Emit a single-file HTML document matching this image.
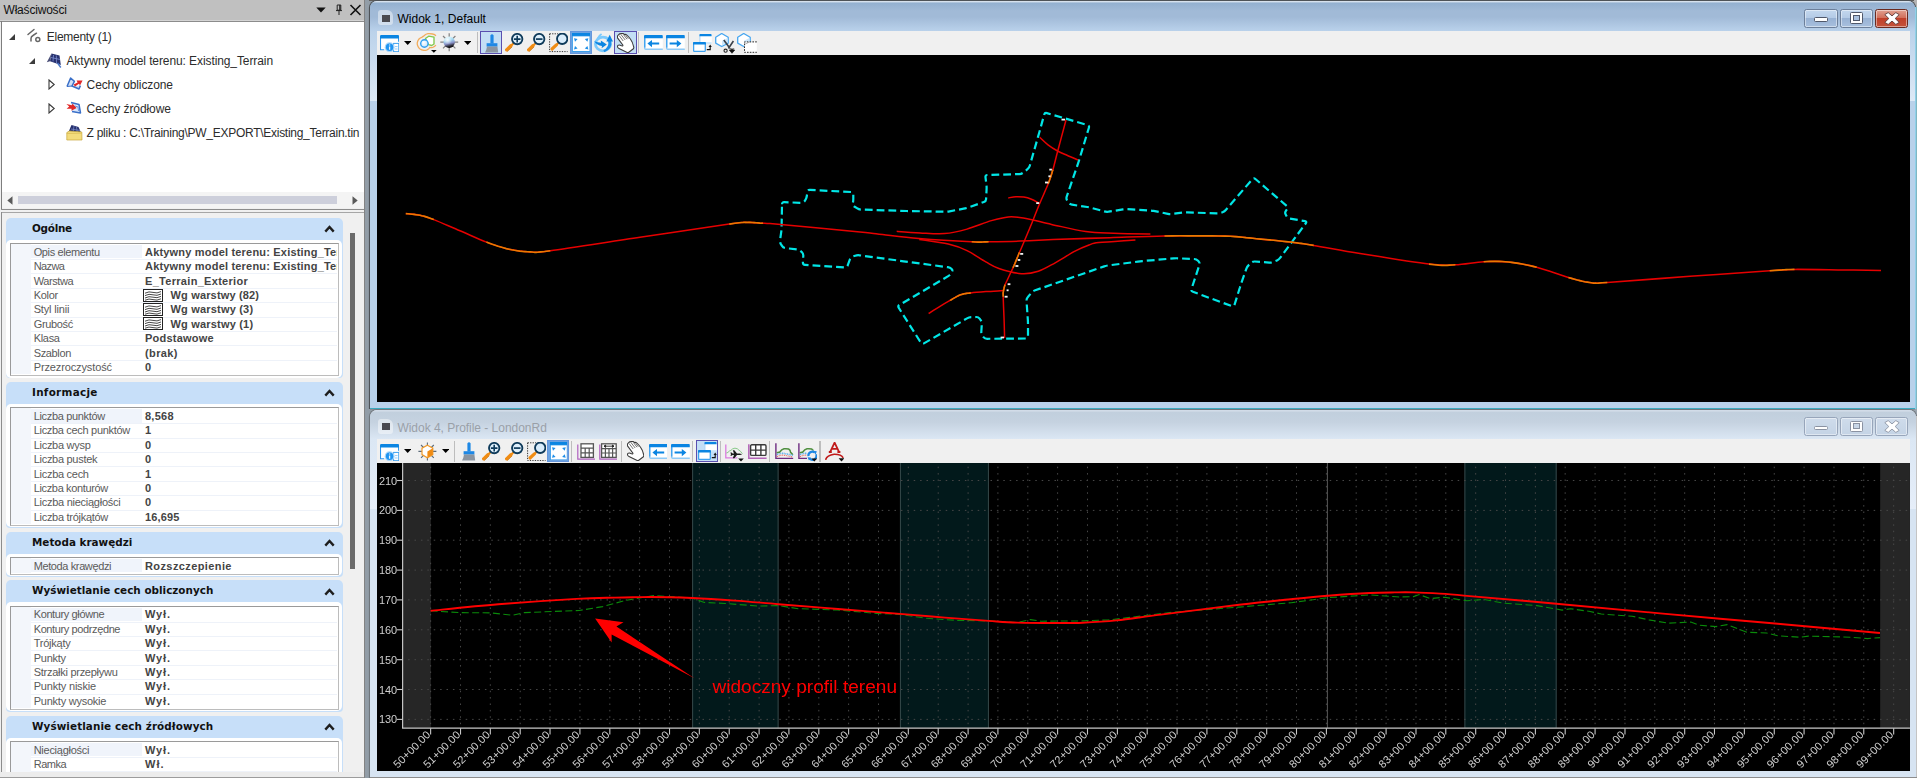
<!DOCTYPE html>
<html lang="pl"><head><meta charset="utf-8"><title>Właściwości</title><style>
html,body{margin:0;padding:0}
body{width:1917px;height:778px;position:relative;overflow:hidden;background:#f0f0f0;font-family:"Liberation Sans",sans-serif}
.a{position:absolute}
.t{position:absolute;white-space:pre;line-height:1;transform:translateY(-50%)}
</style></head>
<body>
<div id="left" class="a" style="left:0;top:0;width:364px;height:778px;overflow:hidden;background:#f0f0f0"><div class="a" style="left:0;top:0;width:364px;height:21px;background:#c0c0c0"></div><div class="a" style="left:0;top:19.8px;width:364px;height:1.1px;background:#d4d4d4"></div><div class="a" style="left:0;top:20.8px;width:364px;height:1.2px;background:#8c8c8c"></div><div class="t" style="left:3.5px;top:10.2px;font:12px 'Liberation Sans',sans-serif;color:#111;letter-spacing:-0.195px;">Właściwości</div><svg class="a" style="left:316px;top:7px" width="10" height="6" viewBox="0 0 10 6"><path d="M0.3 0.6 L9.7 0.6 L5 5.6 Z" fill="#111"/></svg><svg class="a" style="left:335px;top:4px" width="8" height="12" viewBox="0 0 8 12"><path d="M2.2 1 L5.8 1 L5.8 6.2 L2.2 6.2 Z M1 6.6 L7 6.6 M4 6.6 L4 11" fill="none" stroke="#222" stroke-width="1"/><path d="M4.8 1 L4.8 6.2" stroke="#222" stroke-width="1.2"/></svg><svg class="a" style="left:349px;top:4px" width="13" height="12" viewBox="0 0 13 12"><path d="M1.5 1 L11.5 11 M11.5 1 L1.5 11" stroke="#111" stroke-width="1.6" fill="none"/></svg><div class="a" style="left:2px;top:22px;width:362px;height:170px;background:#fff"></div><div class="a" style="left:1px;top:21px;width:1px;height:188px;background:#7e7e7e"></div><svg class="a" style="left:26px;top:28px" width="16" height="16" viewBox="0 0 16 16"><path d="M2 6.5 L8 1.5 M5 13 L5 10.5 Q5 8.5 7 7.5 L10.5 5.2" fill="none" stroke="#666" stroke-width="1.5" stroke-linecap="round"/><circle cx="11.8" cy="11.5" r="2" fill="none" stroke="#666" stroke-width="1.5"/></svg><svg class="a" style="left:46px;top:52px" width="16" height="17" viewBox="0 0 16 17"><path d="M5.5 1.5 L13.5 3.5 L14.8 13 L4 9.2 Z" fill="#26306e"/><path d="M0.8 10.2 L5.5 1.5 L4 9.2 Z" fill="#4a4f78"/><path d="M7.5 3 L7 9.5 M10.3 3.5 L10.5 11 M5 5.5 L14 7.5" stroke="#7d8fd0" stroke-width="0.8" fill="none"/><path d="M11.5 11 L14.8 15.5" stroke="#4a78c8" stroke-width="1.4"/></svg><svg class="a" style="left:66px;top:76px" width="17" height="16" viewBox="0 0 17 16"><path d="M1 10.5 L4.6 2 L8.4 5.4 L6 10 L13 13 L14.4 9.6" fill="#cfe0f8" stroke="#3a6fc8" stroke-width="1.5" stroke-linejoin="round"/><path d="M1 10.5 L6 10" stroke="#3a6fc8" stroke-width="1.2"/><path d="M7.6 8.6 L11.6 6.6 L10.6 4.6 L16.6 4.4 L14 9.6 L13 7.8 L9 10.6 Z" fill="#e02828"/></svg><svg class="a" style="left:66px;top:100px" width="17" height="16" viewBox="0 0 17 16"><path d="M5 2.5 L13 4.5 L14.5 13 L6 11.5" fill="#dbe8fb" stroke="#3a6fc8" stroke-width="1.5" stroke-linejoin="round"/><path d="M0.4 4 L6 5.2 L6.4 3.4 L10.6 8 L5.4 10.8 L5.6 8.8 L0.6 8.8 L3.2 6.4 Z" fill="#e02828"/><path d="M9 6 L12 7 L12.5 11" stroke="#6b95de" stroke-width="1" fill="none"/></svg><svg class="a" style="left:66px;top:123px" width="17" height="18" viewBox="0 0 17 18"><path d="M5.5 2 L12.5 4 L15 9.5 L2.5 9 Z" fill="#26306e"/><path d="M8 3 L7.2 8.5 M10.5 4 L11.2 9 M5 6 L14 7.5" stroke="#7d8fd0" stroke-width="0.7"/><path d="M0.8 9.5 L3.5 8 L15.8 9 L16 17 L0.8 17 Z" fill="#f4dc7c" stroke="#c8a83c" stroke-width="0.7"/><path d="M0.8 10.5 L16 10.2" stroke="#d9bd55" stroke-width="0.8"/></svg><svg class="a" style="left:8px;top:33px" width="8" height="8" viewBox="0 0 8 8"><path d="M7 1 L7 7 L1 7 Z" fill="#3c3c3c"/></svg><svg class="a" style="left:28px;top:57px" width="8" height="8" viewBox="0 0 8 8"><path d="M7 1 L7 7 L1 7 Z" fill="#3c3c3c"/></svg><svg class="a" style="left:48px;top:79px" width="8" height="11" viewBox="0 0 8 11"><path d="M1 1 L6.2 5.5 L1 10 Z" fill="#fff" stroke="#3a3a3a" stroke-width="1.1"/></svg><svg class="a" style="left:48px;top:103px" width="8" height="11" viewBox="0 0 8 11"><path d="M1 1 L6.2 5.5 L1 10 Z" fill="#fff" stroke="#3a3a3a" stroke-width="1.1"/></svg><div class="t" style="left:46.8px;top:37.0px;font:12px 'Liberation Sans',sans-serif;color:#2c2c2c;letter-spacing:-0.269px;">Elementy (1)</div><div class="t" style="left:66.4px;top:61.2px;font:12px 'Liberation Sans',sans-serif;color:#2c2c2c;letter-spacing:-0.092px;">Aktywny model terenu: Existing_Terrain</div><div class="t" style="left:86.6px;top:85.2px;font:12px 'Liberation Sans',sans-serif;color:#2c2c2c;letter-spacing:-0.124px;">Cechy obliczone</div><div class="t" style="left:86.6px;top:108.8px;font:12px 'Liberation Sans',sans-serif;color:#2c2c2c;letter-spacing:-0.077px;">Cechy źródłowe</div><div class="t" style="left:86.6px;top:132.7px;font:12px 'Liberation Sans',sans-serif;color:#2c2c2c;letter-spacing:-0.272px;">Z pliku : C:\Training\PW_EXPORT\Existing_Terrain.tin</div><div class="a" style="left:2px;top:192px;width:362px;height:16.4px;background:#f4f4f4"></div><div class="a" style="left:18.4px;top:196px;width:319px;height:8.4px;background:#cdcfdb"></div><svg class="a" style="left:7px;top:196px" width="6" height="9" viewBox="0 0 6 9"><path d="M5.5 0.3 L5.5 8.7 L0.3 4.5 Z" fill="#5a5a5a"/></svg><svg class="a" style="left:351.5px;top:196px" width="6" height="9" viewBox="0 0 6 9"><path d="M0.5 0.3 L0.5 8.7 L5.7 4.5 Z" fill="#5a5a5a"/></svg><div class="a" style="left:1px;top:208.6px;width:363px;height:1.2px;background:#8c8c8c"></div><div class="a" style="left:1px;top:211.6px;width:363px;height:1.2px;background:#a6a6a6"></div><div class="a" style="left:1px;top:212px;width:1px;height:566px;background:#8c8c8c"></div><div class="a" style="left:5.6px;top:217.8px;width:337.4px;height:160.5px;background:#c7dff9;border-radius:5px 5px 4px 4px"></div><div class="a" style="left:6.4px;top:239.6px;width:335.8px;height:138.1px;background:#fff;border-radius:5px"></div><div class="t" style="left:32px;top:227.70000000000002px;font:bold 10.4px 'DejaVu Sans','Liberation Sans',sans-serif;color:#111;letter-spacing:-0.254px;">Ogólne</div><svg class="a" style="left:324px;top:225.0px" width="11" height="8" viewBox="0 0 11 8"><path d="M1.3 6.6 L5.5 2 L9.7 6.6" fill="none" stroke="#1e1e1e" stroke-width="2.4"/></svg><div class="a" style="left:10px;top:243.0px;width:326.6px;height:131.0px;border:1px solid #9a9a9a;border-right-color:#bcbcbc;border-bottom-color:#bcbcbc;background:#fff"></div><div class="a" style="left:11px;top:244.0px;width:20px;height:130.0px;background:#f3f6fb"></div><div class="a" style="left:31px;top:245.1px;width:111px;height:13.4px;background:#f0f4fb"></div><div class="a" style="left:31px;top:259.0px;width:306px;height:1px;background:#eef2f9"></div><div class="t" style="left:33.7px;top:251.8px;font:11px 'Liberation Sans',sans-serif;color:#5a5a5a;letter-spacing:-0.372px;">Opis elementu</div><div class="a" style="left:143px;top:244.8px;width:194px;height:14px;overflow:hidden"><div class="t" style="left:2px;top:7px;font:bold 11px 'Liberation Sans',sans-serif;color:#444;letter-spacing:0.193px;">Aktywny model terenu: Existing_Terrain</div></div><div class="a" style="left:31px;top:273.4px;width:306px;height:1px;background:#eef2f9"></div><div class="t" style="left:33.7px;top:266.2px;font:11px 'Liberation Sans',sans-serif;color:#5a5a5a;letter-spacing:-0.605px;">Nazwa</div><div class="a" style="left:143px;top:259.2px;width:194px;height:14px;overflow:hidden"><div class="t" style="left:2px;top:7px;font:bold 11px 'Liberation Sans',sans-serif;color:#444;letter-spacing:0.193px;">Aktywny model terenu: Existing_Terrain</div></div><div class="a" style="left:31px;top:287.8px;width:306px;height:1px;background:#eef2f9"></div><div class="t" style="left:33.7px;top:280.6px;font:11px 'Liberation Sans',sans-serif;color:#5a5a5a;letter-spacing:-0.396px;">Warstwa</div><div class="a" style="left:143px;top:273.6px;width:194px;height:14px;overflow:hidden"><div class="t" style="left:2px;top:7px;font:bold 11px 'Liberation Sans',sans-serif;color:#444;letter-spacing:0.304px;">E_Terrain_Exterior</div></div><div class="a" style="left:31px;top:302.2px;width:306px;height:1px;background:#eef2f9"></div><div class="t" style="left:33.7px;top:295.0px;font:11px 'Liberation Sans',sans-serif;color:#5a5a5a;letter-spacing:-0.298px;">Kolor</div><div class="a" style="left:143px;top:288.0px;width:194px;height:14px;overflow:hidden"><svg class="a" style="left:0.4px;top:0.6px" width="20" height="13" viewBox="0 0 20 13"><rect x="0.5" y="0.5" width="19" height="12" fill="#fff" stroke="#222" stroke-width="1"/><path d="M2 4.2 Q6 2 10 3.4 T18 2.6 M2 6.6 Q6 4.4 10 5.8 T18 5 M2 9 Q6 6.8 10 8.2 T18 7.4 M2 11.2 Q6 9.2 10 10.6 T18 9.8" fill="none" stroke="#333" stroke-width="0.9"/></svg><div class="t" style="left:27.5px;top:7px;font:bold 11px 'Liberation Sans',sans-serif;color:#444;letter-spacing:0.168px;">Wg warstwy (82)</div></div><div class="a" style="left:31px;top:316.6px;width:306px;height:1px;background:#eef2f9"></div><div class="t" style="left:33.7px;top:309.40000000000003px;font:11px 'Liberation Sans',sans-serif;color:#5a5a5a;letter-spacing:-0.16px;">Styl linii</div><div class="a" style="left:143px;top:302.4px;width:194px;height:14px;overflow:hidden"><svg class="a" style="left:0.4px;top:0.6px" width="20" height="13" viewBox="0 0 20 13"><rect x="0.5" y="0.5" width="19" height="12" fill="#fff" stroke="#222" stroke-width="1"/><path d="M2 4.2 Q6 2 10 3.4 T18 2.6 M2 6.6 Q6 4.4 10 5.8 T18 5 M2 9 Q6 6.8 10 8.2 T18 7.4 M2 11.2 Q6 9.2 10 10.6 T18 9.8" fill="none" stroke="#333" stroke-width="0.9"/></svg><div class="t" style="left:27.5px;top:7px;font:bold 11px 'Liberation Sans',sans-serif;color:#444;letter-spacing:0.194px;">Wg warstwy (3)</div></div><div class="a" style="left:31px;top:331.0px;width:306px;height:1px;background:#eef2f9"></div><div class="t" style="left:33.7px;top:323.8px;font:11px 'Liberation Sans',sans-serif;color:#5a5a5a;letter-spacing:-0.354px;">Grubość</div><div class="a" style="left:143px;top:316.8px;width:194px;height:14px;overflow:hidden"><svg class="a" style="left:0.4px;top:0.6px" width="20" height="13" viewBox="0 0 20 13"><rect x="0.5" y="0.5" width="19" height="12" fill="#fff" stroke="#222" stroke-width="1"/><path d="M2 4.2 Q6 2 10 3.4 T18 2.6 M2 6.6 Q6 4.4 10 5.8 T18 5 M2 9 Q6 6.8 10 8.2 T18 7.4 M2 11.2 Q6 9.2 10 10.6 T18 9.8" fill="none" stroke="#333" stroke-width="0.9"/></svg><div class="t" style="left:27.5px;top:7px;font:bold 11px 'Liberation Sans',sans-serif;color:#444;letter-spacing:0.194px;">Wg warstwy (1)</div></div><div class="a" style="left:31px;top:345.4px;width:306px;height:1px;background:#eef2f9"></div><div class="t" style="left:33.7px;top:338.20000000000005px;font:11px 'Liberation Sans',sans-serif;color:#5a5a5a;letter-spacing:-0.306px;">Klasa</div><div class="a" style="left:143px;top:331.2px;width:194px;height:14px;overflow:hidden"><div class="t" style="left:2px;top:7px;font:bold 11px 'Liberation Sans',sans-serif;color:#444;letter-spacing:0.228px;">Podstawowe</div></div><div class="a" style="left:31px;top:359.8px;width:306px;height:1px;background:#eef2f9"></div><div class="t" style="left:33.7px;top:352.6px;font:11px 'Liberation Sans',sans-serif;color:#5a5a5a;letter-spacing:-0.352px;">Szablon</div><div class="a" style="left:143px;top:345.6px;width:194px;height:14px;overflow:hidden"><div class="t" style="left:2px;top:7px;font:bold 11px 'Liberation Sans',sans-serif;color:#444;letter-spacing:0.39px;">(brak)</div></div><div class="t" style="left:33.7px;top:367.0px;font:11px 'Liberation Sans',sans-serif;color:#5a5a5a;letter-spacing:-0.125px;">Przezroczystość</div><div class="a" style="left:143px;top:360.0px;width:194px;height:14px;overflow:hidden"><div class="t" style="left:2px;top:7px;font:bold 11px 'Liberation Sans',sans-serif;color:#444;letter-spacing:0.075px;">0</div></div><div class="a" style="left:5.6px;top:382.0px;width:337.4px;height:146.1px;background:#c7dff9;border-radius:5px 5px 4px 4px"></div><div class="a" style="left:6.4px;top:403.8px;width:335.8px;height:123.7px;background:#fff;border-radius:5px"></div><div class="t" style="left:32px;top:391.9px;font:bold 10.4px 'DejaVu Sans','Liberation Sans',sans-serif;color:#111;letter-spacing:0.294px;">Informacje</div><svg class="a" style="left:324px;top:389.2px" width="11" height="8" viewBox="0 0 11 8"><path d="M1.3 6.6 L5.5 2 L9.7 6.6" fill="none" stroke="#1e1e1e" stroke-width="2.4"/></svg><div class="a" style="left:10px;top:407.2px;width:326.6px;height:116.6px;border:1px solid #9a9a9a;border-right-color:#bcbcbc;border-bottom-color:#bcbcbc;background:#fff"></div><div class="a" style="left:11px;top:408.2px;width:20px;height:115.6px;background:#f3f6fb"></div><div class="a" style="left:31px;top:409.3px;width:111px;height:13.4px;background:#f0f4fb"></div><div class="a" style="left:31px;top:423.2px;width:306px;height:1px;background:#eef2f9"></div><div class="t" style="left:33.7px;top:416.0px;font:11px 'Liberation Sans',sans-serif;color:#5a5a5a;letter-spacing:-0.331px;">Liczba punktów</div><div class="a" style="left:143px;top:409.0px;width:194px;height:14px;overflow:hidden"><div class="t" style="left:2px;top:7px;font:bold 11px 'Liberation Sans',sans-serif;color:#444;letter-spacing:0.254px;">8,568</div></div><div class="a" style="left:31px;top:437.6px;width:306px;height:1px;background:#eef2f9"></div><div class="t" style="left:33.7px;top:430.4px;font:11px 'Liberation Sans',sans-serif;color:#5a5a5a;letter-spacing:-0.312px;">Liczba cech punktów</div><div class="a" style="left:143px;top:423.4px;width:194px;height:14px;overflow:hidden"><div class="t" style="left:2px;top:7px;font:bold 11px 'Liberation Sans',sans-serif;color:#444;">1</div></div><div class="a" style="left:31px;top:452.0px;width:306px;height:1px;background:#eef2f9"></div><div class="t" style="left:33.7px;top:444.8px;font:11px 'Liberation Sans',sans-serif;color:#5a5a5a;letter-spacing:-0.284px;">Liczba wysp</div><div class="a" style="left:143px;top:437.8px;width:194px;height:14px;overflow:hidden"><div class="t" style="left:2px;top:7px;font:bold 11px 'Liberation Sans',sans-serif;color:#444;letter-spacing:0.075px;">0</div></div><div class="a" style="left:31px;top:466.4px;width:306px;height:1px;background:#eef2f9"></div><div class="t" style="left:33.7px;top:459.2px;font:11px 'Liberation Sans',sans-serif;color:#5a5a5a;letter-spacing:-0.29px;">Liczba pustek</div><div class="a" style="left:143px;top:452.2px;width:194px;height:14px;overflow:hidden"><div class="t" style="left:2px;top:7px;font:bold 11px 'Liberation Sans',sans-serif;color:#444;letter-spacing:0.075px;">0</div></div><div class="a" style="left:31px;top:480.8px;width:306px;height:1px;background:#eef2f9"></div><div class="t" style="left:33.7px;top:473.6px;font:11px 'Liberation Sans',sans-serif;color:#5a5a5a;letter-spacing:-0.281px;">Liczba cech</div><div class="a" style="left:143px;top:466.6px;width:194px;height:14px;overflow:hidden"><div class="t" style="left:2px;top:7px;font:bold 11px 'Liberation Sans',sans-serif;color:#444;">1</div></div><div class="a" style="left:31px;top:495.2px;width:306px;height:1px;background:#eef2f9"></div><div class="t" style="left:33.7px;top:488.0px;font:11px 'Liberation Sans',sans-serif;color:#5a5a5a;letter-spacing:-0.347px;">Liczba konturów</div><div class="a" style="left:143px;top:481.0px;width:194px;height:14px;overflow:hidden"><div class="t" style="left:2px;top:7px;font:bold 11px 'Liberation Sans',sans-serif;color:#444;letter-spacing:0.075px;">0</div></div><div class="a" style="left:31px;top:509.6px;width:306px;height:1px;background:#eef2f9"></div><div class="t" style="left:33.7px;top:502.4px;font:11px 'Liberation Sans',sans-serif;color:#5a5a5a;letter-spacing:-0.264px;">Liczba nieciągłości</div><div class="a" style="left:143px;top:495.4px;width:194px;height:14px;overflow:hidden"><div class="t" style="left:2px;top:7px;font:bold 11px 'Liberation Sans',sans-serif;color:#444;letter-spacing:0.075px;">0</div></div><div class="t" style="left:33.7px;top:516.8px;font:11px 'Liberation Sans',sans-serif;color:#5a5a5a;letter-spacing:-0.286px;">Liczba trójkątów</div><div class="a" style="left:143px;top:509.8px;width:194px;height:14px;overflow:hidden"><div class="t" style="left:2px;top:7px;font:bold 11px 'Liberation Sans',sans-serif;color:#444;letter-spacing:0.157px;">16,695</div></div><div class="a" style="left:5.6px;top:531.8px;width:337.4px;height:45.3px;background:#c7dff9;border-radius:5px 5px 4px 4px"></div><div class="a" style="left:6.4px;top:553.6px;width:335.8px;height:22.9px;background:#fff;border-radius:5px"></div><div class="t" style="left:32px;top:541.6999999999999px;font:bold 10.4px 'DejaVu Sans','Liberation Sans',sans-serif;color:#111;letter-spacing:-0.001px;">Metoda krawędzi</div><svg class="a" style="left:324px;top:539.0px" width="11" height="8" viewBox="0 0 11 8"><path d="M1.3 6.6 L5.5 2 L9.7 6.6" fill="none" stroke="#1e1e1e" stroke-width="2.4"/></svg><div class="a" style="left:10px;top:557.0px;width:326.6px;height:15.8px;border:1px solid #9a9a9a;border-right-color:#bcbcbc;border-bottom-color:#bcbcbc;background:#fff"></div><div class="a" style="left:11px;top:558.0px;width:20px;height:14.8px;background:#f3f6fb"></div><div class="a" style="left:31px;top:559.1px;width:111px;height:13.4px;background:#f0f4fb"></div><div class="t" style="left:33.7px;top:565.8px;font:11px 'Liberation Sans',sans-serif;color:#5a5a5a;letter-spacing:-0.384px;">Metoda krawędzi</div><div class="a" style="left:143px;top:558.8px;width:194px;height:14px;overflow:hidden"><div class="t" style="left:2px;top:7px;font:bold 11px 'Liberation Sans',sans-serif;color:#444;letter-spacing:0.399px;">Rozszczepienie</div></div><div class="a" style="left:5.6px;top:580.4px;width:337.4px;height:131.7px;background:#c7dff9;border-radius:5px 5px 4px 4px"></div><div class="a" style="left:6.4px;top:602.2px;width:335.8px;height:109.3px;background:#fff;border-radius:5px"></div><div class="t" style="left:32px;top:590.3px;font:bold 10.4px 'DejaVu Sans','Liberation Sans',sans-serif;color:#111;letter-spacing:0.012px;">Wyświetlanie cech obliczonych</div><svg class="a" style="left:324px;top:587.6px" width="11" height="8" viewBox="0 0 11 8"><path d="M1.3 6.6 L5.5 2 L9.7 6.6" fill="none" stroke="#1e1e1e" stroke-width="2.4"/></svg><div class="a" style="left:10px;top:605.6px;width:326.6px;height:102.2px;border:1px solid #9a9a9a;border-right-color:#bcbcbc;border-bottom-color:#bcbcbc;background:#fff"></div><div class="a" style="left:11px;top:606.6px;width:20px;height:101.2px;background:#f3f6fb"></div><div class="a" style="left:31px;top:607.7px;width:111px;height:13.4px;background:#f0f4fb"></div><div class="a" style="left:31px;top:621.6px;width:306px;height:1px;background:#eef2f9"></div><div class="t" style="left:33.7px;top:614.4px;font:11px 'Liberation Sans',sans-serif;color:#5a5a5a;letter-spacing:-0.381px;">Kontury główne</div><div class="a" style="left:143px;top:607.4px;width:194px;height:14px;overflow:hidden"><div class="t" style="left:2px;top:7px;font:bold 11px 'Liberation Sans',sans-serif;color:#444;letter-spacing:0.895px;">Wył.</div></div><div class="a" style="left:31px;top:636.0px;width:306px;height:1px;background:#eef2f9"></div><div class="t" style="left:33.7px;top:628.8px;font:11px 'Liberation Sans',sans-serif;color:#5a5a5a;letter-spacing:-0.385px;">Kontury podrzędne</div><div class="a" style="left:143px;top:621.8px;width:194px;height:14px;overflow:hidden"><div class="t" style="left:2px;top:7px;font:bold 11px 'Liberation Sans',sans-serif;color:#444;letter-spacing:0.895px;">Wył.</div></div><div class="a" style="left:31px;top:650.4px;width:306px;height:1px;background:#eef2f9"></div><div class="t" style="left:33.7px;top:643.1999999999999px;font:11px 'Liberation Sans',sans-serif;color:#5a5a5a;letter-spacing:-0.24px;">Trójkąty</div><div class="a" style="left:143px;top:636.2px;width:194px;height:14px;overflow:hidden"><div class="t" style="left:2px;top:7px;font:bold 11px 'Liberation Sans',sans-serif;color:#444;letter-spacing:0.895px;">Wył.</div></div><div class="a" style="left:31px;top:664.8px;width:306px;height:1px;background:#eef2f9"></div><div class="t" style="left:33.7px;top:657.6px;font:11px 'Liberation Sans',sans-serif;color:#5a5a5a;letter-spacing:-0.257px;">Punkty</div><div class="a" style="left:143px;top:650.6px;width:194px;height:14px;overflow:hidden"><div class="t" style="left:2px;top:7px;font:bold 11px 'Liberation Sans',sans-serif;color:#444;letter-spacing:0.895px;">Wył.</div></div><div class="a" style="left:31px;top:679.2px;width:306px;height:1px;background:#eef2f9"></div><div class="t" style="left:33.7px;top:672.0px;font:11px 'Liberation Sans',sans-serif;color:#5a5a5a;letter-spacing:-0.269px;">Strzałki przepływu</div><div class="a" style="left:143px;top:665.0px;width:194px;height:14px;overflow:hidden"><div class="t" style="left:2px;top:7px;font:bold 11px 'Liberation Sans',sans-serif;color:#444;letter-spacing:0.895px;">Wył.</div></div><div class="a" style="left:31px;top:693.6px;width:306px;height:1px;background:#eef2f9"></div><div class="t" style="left:33.7px;top:686.4px;font:11px 'Liberation Sans',sans-serif;color:#5a5a5a;letter-spacing:-0.201px;">Punkty niskie</div><div class="a" style="left:143px;top:679.4px;width:194px;height:14px;overflow:hidden"><div class="t" style="left:2px;top:7px;font:bold 11px 'Liberation Sans',sans-serif;color:#444;letter-spacing:0.895px;">Wył.</div></div><div class="t" style="left:33.7px;top:700.8px;font:11px 'Liberation Sans',sans-serif;color:#5a5a5a;letter-spacing:-0.237px;">Punkty wysokie</div><div class="a" style="left:143px;top:693.8px;width:194px;height:14px;overflow:hidden"><div class="t" style="left:2px;top:7px;font:bold 11px 'Liberation Sans',sans-serif;color:#444;letter-spacing:0.895px;">Wył.</div></div><div class="a" style="left:5.6px;top:715.8px;width:337.4px;height:88.5px;background:#c7dff9;border-radius:5px 5px 4px 4px"></div><div class="a" style="left:6.4px;top:737.6px;width:335.8px;height:66.1px;background:#fff;border-radius:5px"></div><div class="t" style="left:32px;top:725.6999999999999px;font:bold 10.4px 'DejaVu Sans','Liberation Sans',sans-serif;color:#111;letter-spacing:0.088px;">Wyświetlanie cech źródłowych</div><svg class="a" style="left:324px;top:723.0px" width="11" height="8" viewBox="0 0 11 8"><path d="M1.3 6.6 L5.5 2 L9.7 6.6" fill="none" stroke="#1e1e1e" stroke-width="2.4"/></svg><div class="a" style="left:10px;top:741.0px;width:326.6px;height:59.0px;border:1px solid #9a9a9a;border-right-color:#bcbcbc;border-bottom-color:#bcbcbc;background:#fff"></div><div class="a" style="left:11px;top:742.0px;width:20px;height:58.0px;background:#f3f6fb"></div><div class="a" style="left:31px;top:743.1px;width:111px;height:13.4px;background:#f0f4fb"></div><div class="a" style="left:31px;top:757.0px;width:306px;height:1px;background:#eef2f9"></div><div class="t" style="left:33.7px;top:749.8px;font:11px 'Liberation Sans',sans-serif;color:#5a5a5a;letter-spacing:-0.267px;">Nieciągłości</div><div class="a" style="left:143px;top:742.8px;width:194px;height:14px;overflow:hidden"><div class="t" style="left:2px;top:7px;font:bold 11px 'Liberation Sans',sans-serif;color:#444;letter-spacing:0.895px;">Wył.</div></div><div class="a" style="left:31px;top:771.4px;width:306px;height:1px;background:#eef2f9"></div><div class="t" style="left:33.7px;top:764.1999999999999px;font:11px 'Liberation Sans',sans-serif;color:#5a5a5a;letter-spacing:-0.489px;">Ramka</div><div class="a" style="left:143px;top:757.2px;width:194px;height:14px;overflow:hidden"><div class="t" style="left:2px;top:7px;font:bold 11px 'Liberation Sans',sans-serif;color:#444;letter-spacing:1.0px;">Wł.</div></div><div class="a" style="left:31px;top:785.8px;width:306px;height:1px;background:#eef2f9"></div><div class="a" style="left:349.7px;top:233.4px;width:5.2px;height:335.6px;background:#6b6b6b"></div><div class="a" style="left:0;top:772.3px;width:364px;height:5.7px;background:#ececec"></div><div class="a" style="left:0;top:776.5px;width:364px;height:1.5px;background:#9c9c9c"></div></div>
<div class="a" style="left:363.6px;top:0;width:1.4px;height:778px;background:#838383"></div><div class="a" style="left:364.9px;top:0;width:14px;height:778px;background:#929da7"></div><div class="a" style="left:1900px;top:0;width:17px;height:12px;background:#b4b4b4"></div><div class="a" style="left:1900px;top:409px;width:17px;height:12px;background:#9aa4ae"></div><div class="a" style="left:369px;top:0;width:1545px;height:1.1px;background:#5f5d5b"></div><div class="a" style="left:370.0px;top:1.0px;width:1544.8px;height:407.2px;background:#b9d1ea;border-radius:7px 7px 0 0;box-shadow:0 0 0 1.1px #4e5358"></div><div class="a" style="left:370.0px;top:1.0px;width:1544.8px;height:30px;background:linear-gradient(#d6e1ed 0,#d6e1ed 1.1px,#93b0d0 1.8px,#a1bad7 10px,#a1bad7 16px,#b8d0ea 29px,#b9d1ea 100%);border-radius:7px 7px 0 0"></div><div class="a" style="left:378.3px;top:10.2px;width:15px;height:14.8px;border-radius:3px 6px 3px 3px;background:rgba(255,255,255,.45)"></div><div class="a" style="left:382.1px;top:14.5px;width:7.8px;height:7.2px;background:#4a4a50"></div><div class="t" style="left:397.4px;top:18.7px;font:12px 'Liberation Sans',sans-serif;color:#000;letter-spacing:0.035px;">Widok 1, Default</div><div class="a" style="left:1804.3px;top:8.9px;width:33.4px;height:19.2px;box-sizing:border-box;border:1px solid #6c7f9a;border-radius:2.5px;background:linear-gradient(#c3d7ee 0%,#b4cbe6 45%,#98b2d4 50%,#a8c0de 100%);box-shadow:inset 0 0 0 1px rgba(255,255,255,.45)"></div><div class="a" style="left:1814.4px;top:17.2px;width:13.2px;height:4.6px;box-sizing:border-box;background:#fff;border:1px solid #50586a;border-radius:1.5px"></div><div class="a" style="left:1839.6px;top:8.9px;width:33.2px;height:19.2px;box-sizing:border-box;border:1px solid #6c7f9a;border-radius:2.5px;background:linear-gradient(#c3d7ee 0%,#b4cbe6 45%,#98b2d4 50%,#a8c0de 100%);box-shadow:inset 0 0 0 1px rgba(255,255,255,.45)"></div><div class="a" style="left:1849.6px;top:12.2px;width:13.2px;height:11.6px;box-sizing:border-box;border:1px solid #50586a;border-radius:1.5px;background:#fff"></div><div class="a" style="left:1852.5px;top:15.1px;width:7.4px;height:5.8px;box-sizing:border-box;border:1px solid #50586a;background:#a9c0de"></div><div class="a" style="left:1875.0px;top:8.9px;width:33.4px;height:19.2px;box-sizing:border-box;border:1px solid #6a2a20;border-radius:2.5px;background:linear-gradient(#e0a090 0%,#d2705c 45%,#c0402a 50%,#c4533c 100%);box-shadow:inset 0 0 0 1px rgba(255,255,255,.45)"></div><svg class="a" style="left:1883.7px;top:11.8px" width="16" height="13" viewBox="0 0 16 13"><path d="M0.8 2.6 L4.2 0.6 L8 3.9 L11.8 0.6 L15.2 2.6 L11.2 6.5 L15.2 10.4 L11.8 12.4 L8 9.1 L4.2 12.4 L0.8 10.4 L4.8 6.5 Z" fill="#fff" stroke="#5a3a3a" stroke-width="0.9" stroke-linejoin="round"/></svg><div class="a" style="left:377.0px;top:30.6px;width:1533.0px;height:25px;background:#f0f0f0"></div>
<div class="a" style="left:369.6px;top:408px;width:1545.2px;height:1.2px;background:#3aaabf"></div><div class="a" style="left:369.6px;top:409.1px;width:1545.2px;height:0.8px;background:#8a8a94"></div><div class="a" style="left:370.2px;top:31px;width:6.8px;height:70.4px;background:linear-gradient(#bbd2ea,#dde9f6)"></div><div class="a" style="left:1910px;top:31px;width:4.8px;height:70.4px;background:linear-gradient(#bbd2ea,#dde9f6)"></div><svg class="a" style="left:379.8px;top:35.0px" width="19.4" height="17.2" viewBox="0 0 19.4 17.2"><rect x="0.5" y="2" width="18.2" height="12.8" fill="#fff"/><path d="M0.5 3 V14.7 H4.2 M18.6 3 V6.8" fill="none" stroke="#2b96ee" stroke-width="1.1"/><path d="M0 3.4 V1.2 Q0 0 1.2 0 H18 Q19.2 0 19.2 1.2 V3.4 Z" fill="#0b85e2"/><rect x="13.6" y="8.4" width="5.2" height="8.3" fill="#fff" stroke="#3a9ff0" stroke-width="1"/><path d="M15 11.6 H17.6 M15 14 H17.6" stroke="#8cc6f7" stroke-width="0.9"/><circle cx="9.6" cy="12.2" r="4.9" fill="#a9d6f9"/><circle cx="9.6" cy="12.2" r="3.7" fill="#1f95f2"/><path d="M9.6 11.4 V14.8 M9.6 9.4 V10.4" stroke="#e8f4fe" stroke-width="1.3"/></svg><svg class="a" style="left:403.7px;top:40.6px" width="7.4" height="4" viewBox="0 0 7.4 4"><path d="M0 0 H7.4 L3.7 4 Z" fill="#000"/></svg><svg class="a" style="left:414px;top:30.0px" width="22.6" height="21.4" viewBox="0 0 22.6 21.4"><defs><radialGradient id="dsg" cx="0.4" cy="0.4" r="0.7"><stop offset="0" stop-color="#fff"/><stop offset="1" stop-color="#c4e0f8"/></radialGradient></defs><path d="M21.9 5.8 Q21 4.4 18.7 4 Q16.4 3.4 14 3.7 Q12 4 10 5.8 Q8.6 6.4 7.7 7.4 Q6.2 7.8 5 9 Q3.6 10.6 3.3 12.7 Q3.1 14.2 3.7 15.7 Q4.4 17.6 6 19 Q7.6 20.2 10 20.4 Q11.8 20.6 13.4 19.7 Q14.8 19 15.7 17.5 Q17 17.7 18.7 17.4 Q20.6 17 21.9 15.2" fill="none" stroke="#f2ac5c" stroke-width="1.3"/><path d="M0 0 Q0 0 0 0 Q17 17.7 15.7 17.5 Q14.8 19 13.4 19.7 Q11.8 20.6 10 20.4 Q7.6 20.2 6 19 Q4.4 17.6 3.7 15.7 Q3.1 14.2 3.3 12.7 Q3.6 10.6 5 9 Q6.2 7.8 7.7 7.4 Q8.6 6.4 10 5.8 Z" fill="none" stroke="none"/><path d="M11.4 8.5 L14.7 6.2 L20 7.2 V14 L17.7 15.5 L14.7 14.7 Z" fill="#fff" stroke="#82c84c" stroke-width="1.35" stroke-linejoin="round"/><circle cx="10.4" cy="13.5" r="3.7" fill="url(#dsg)" stroke="#2f9ff0" stroke-width="1.4"/></svg><svg class="a" style="left:431px;top:50.0px" width="5.7" height="2.8" viewBox="0 0 5.7 2.8"><path d="M0 0 H5.7 L2.85 2.8 Z" fill="#000"/></svg><svg class="a" style="left:440px;top:33.4px" width="18.6" height="18.6" viewBox="0 0 18.6 18.6"><defs><linearGradient id="gg" x1="0.3" y1="0" x2="0.55" y2="1"><stop offset="0" stop-color="#d8f6fc"/><stop offset="0.35" stop-color="#9fd6f2"/><stop offset="0.62" stop-color="#8a92c8"/><stop offset="0.85" stop-color="#2a2a34"/><stop offset="1" stop-color="#000"/></linearGradient><radialGradient id="gh" cx="0.36" cy="0.3" r="0.4"><stop offset="0" stop-color="#fff" stop-opacity="0.9"/><stop offset="1" stop-color="#fff" stop-opacity="0"/></radialGradient></defs><path d="M9.2 0.3 V18.2 M0.3 9.2 H18.2 M3 3 L15.4 15.4 M15.4 3 L3 15.4" stroke="#808080" stroke-width="1.2"/><circle cx="9.2" cy="9.2" r="5.7" fill="url(#gg)"/><circle cx="9.2" cy="9.2" r="5.7" fill="url(#gh)"/></svg><svg class="a" style="left:463.7px;top:40.6px" width="7.4" height="4" viewBox="0 0 7.4 4"><path d="M0 0 H7.4 L3.7 4 Z" fill="#000"/></svg><div class="a" style="left:476.6px;top:32.0px;width:1.3px;height:21px;background:#bdbdbd"></div><div class="a" style="left:480.1px;top:31.200000000000003px;width:22px;height:22.6px;background:#c3def5;border:1.3px solid #5a4fb0;box-sizing:border-box"></div><svg class="a" style="left:484.6px;top:33.6px" width="14" height="19" viewBox="0 0 14 19"><path d="M5.4 1.2 Q7 -0.6 8.6 1.2 V9.4 H5.4 Z" fill="#1e88e5"/><path d="M1.6 9.2 H12.4 V12.6 H1.6 Z" fill="#1e88e5"/><path d="M2 12.6 H12.4 L13.2 18.4 L0 18.4 Q1.6 16 2 12.6 Z" fill="#8b95a1"/></svg><svg class="a" style="left:505px;top:33.2px" width="18.8" height="19.4" viewBox="0 0 18.8 19.4"><path d="M1.6 16.8 L5.9 12.7" stroke="#f08c14" stroke-width="3.2" stroke-linecap="round"/><path d="M5.6 13 L8.6 10.2" stroke="#f08c14" stroke-width="2"/><path d="M2.2 18.6 L7.2 13.8" stroke="#c87410" stroke-width="0.8"/><circle cx="12.2" cy="6.1" r="5.2" fill="#dff0fc" stroke="#0e3a5a" stroke-width="1.85"/><path d="M12.2 2.8 V9.4 M8.9 6.1 H15.5" stroke="#0e3a5a" stroke-width="1.6"/></svg><svg class="a" style="left:527.4px;top:33.2px" width="18.8" height="19.4" viewBox="0 0 18.8 19.4"><path d="M1.6 16.8 L5.9 12.7" stroke="#f08c14" stroke-width="3.2" stroke-linecap="round"/><path d="M5.6 13 L8.6 10.2" stroke="#f08c14" stroke-width="2"/><path d="M2.2 18.6 L7.2 13.8" stroke="#c87410" stroke-width="0.8"/><circle cx="12.2" cy="6.1" r="5.2" fill="#dff0fc" stroke="#0e3a5a" stroke-width="1.85"/><path d="M8.9 6.1 H15.5" stroke="#0e3a5a" stroke-width="1.7"/></svg><svg class="a" style="left:549.3px;top:33.2px" width="19" height="19.4" viewBox="0 0 19 19.4"><path d="M0.6 0.8 H9 M0.6 0.8 V18.6 H18.6" fill="none" stroke="#333" stroke-width="1" stroke-dasharray="1.3 1.2"/><path d="M3 16 L7.4 11.9" stroke="#f08c14" stroke-width="3.2" stroke-linecap="round"/><path d="M7 12.2 L10 9.6" stroke="#f08c14" stroke-width="2"/><circle cx="13.2" cy="5.8" r="5.2" fill="#d9ecfb" stroke="#0e3a5a" stroke-width="1.85"/></svg><div class="a" style="left:569.5px;top:31.200000000000003px;width:22.4px;height:22.6px;background:#6ba3e2;border:1px solid #6596dc;box-sizing:border-box"></div><svg class="a" style="left:572.1px;top:33.1px" width="18.3" height="19.4" viewBox="0 0 18.3 19.4"><rect x="0" y="0" width="18.3" height="19.4" fill="#3d9ee9"/><rect x="0" y="0" width="18.3" height="2.8" fill="#0b85e2"/><rect x="0.9" y="3.4" width="16.6" height="14.599999999999998" fill="#fff"/><path d="M2 5.2 l3.6 0.9 l-2.6 2.6 Z M16.400000000000002 5.2 l-3.6 0.9 l2.6 2.6 Z M2 16.4 l3.6 -0.9 l-2.6 -2.6 Z M16.400000000000002 16.4 l-3.6 -0.9 l2.6 -2.6 Z" fill="#1f8fe8"/></svg><svg class="a" style="left:594px;top:33.0px" width="19.2" height="19.6" viewBox="0 0 19.2 19.6"><ellipse cx="9" cy="11" rx="7.6" ry="6.8" fill="none" stroke="#7ccafc" stroke-width="2.8"/><path d="M3.6 5.6 Q5 2.6 7.6 1" fill="none" stroke="#7ccafc" stroke-width="2"/><path d="M0.3 8.3 Q3 12.6 8 12.9 L7.6 15.2 L12.8 11.4 L6.8 7.4 L7 9.8 Q3.6 9.6 0.3 8.3 Z" fill="#0b85e2"/><path d="M14.2 8 Q15.4 14.4 9.4 17.2 L10.4 19.2 Q18.6 15.6 17.2 8 Z" fill="#1e90ea"/><path d="M12.3 8.4 L15.7 1.8 L19 8.4 Z" fill="#0b85e2"/></svg><div class="a" style="left:614.3px;top:31.3px;width:22.5px;height:22.4px;background:#c3def5;border:1.3px solid #5a4fb0;box-sizing:border-box"></div><svg class="a" style="left:617.2px;top:32.5px" width="17.4" height="20" viewBox="0 0 17.4 20"><path d="M4.4 0.6 Q2.6 0.5 1.4 1.8 Q0 3 0.5 4.8 L5.8 12 Q6.3 13.3 4.6 12.8 L2.4 12 Q0.5 11.9 0.5 13.7 Q0.6 14.8 2 15.5 L10.2 19.4 Q11 19.8 11.8 19.2 L16.4 15.8 Q17 15 16.7 13.8 Q15.6 9 13.4 6 Q11.6 3.4 9.6 1.8 Q8.6 1 7.6 1.6 Q6.4 0 4.4 0.6 Z" fill="#fff" stroke="#3c3c3c" stroke-width="1.1" stroke-linejoin="round"/><path d="M2.2 2.6 L6.2 8 M4 1.6 L8.2 7 M6.4 1.5 L10 6.2 M8.6 2.2 L11.4 5.8" stroke="#666" stroke-width="0.9" fill="none"/></svg><div class="a" style="left:638px;top:32.0px;width:1.3px;height:21px;background:#bdbdbd"></div><svg class="a" style="left:643.8px;top:35.0px" width="18.8" height="15.2" viewBox="0 0 18.8 15.2"><rect x="0.6" y="1" width="18.2" height="13.4" fill="#fff"/><path d="M0.7 3 V13.4 Q0.7 14.2 1.6 14.2 H18.8" fill="none" stroke="#8fcaf6" stroke-width="1.5"/><path d="M0.7 3 V12.6" fill="none" stroke="#3a9ff0" stroke-width="1.2"/><path d="M0 3.2 V1 Q0 0 1 0 H17.8 Q18.8 0 18.8 1 V3.2 Z" fill="#0b85e2"/><path d="M3.4 8.6 L8 5 V7.6 H15.2 V9.6 H8 V12.2 Z" fill="#0b85e2"/></svg><svg class="a" style="left:666.2px;top:35.0px" width="18.8" height="15.2" viewBox="0 0 18.8 15.2"><rect x="0.6" y="1" width="18.2" height="13.4" fill="#fff"/><path d="M0.7 3 V13.4 Q0.7 14.2 1.6 14.2 H18.8" fill="none" stroke="#8fcaf6" stroke-width="1.5"/><path d="M0.7 3 V12.6" fill="none" stroke="#3a9ff0" stroke-width="1.2"/><path d="M0 3.2 V1 Q0 0 1 0 H17.8 Q18.8 0 18.8 1 V3.2 Z" fill="#0b85e2"/><path d="M15.4 8.6 L10.8 5 V7.6 H3.6 V9.6 H10.8 V12.2 Z" fill="#0b85e2"/></svg><div class="a" style="left:688px;top:32.0px;width:1.3px;height:21px;background:#bdbdbd"></div><svg class="a" style="left:693.3px;top:33.800000000000004px" width="19" height="18" viewBox="0 0 19 18"><rect x="6.8" y="0.4" width="12" height="9.2" fill="#fff"/><path d="M6.9 2 V9 H18.6" fill="none" stroke="#a8d5f8" stroke-width="1.1"/><path d="M6.4 2.3 V0.8 Q6.4 0 7.2 0 H17.8 Q18.6 0 18.6 0.8 V2.3 Z" fill="#0b85e2"/><rect x="0.6" y="8.7" width="11.7" height="8.7" rx="1" fill="#fff" stroke="#3fa2f0" stroke-width="1.3"/><path d="M0 10.4 V9 Q0 8.1 0.9 8.1 H12 Q12.9 8.1 12.9 9 V10.4 Z" fill="#0b85e2"/><path d="M13.8 15.6 H17.2 V12.6" fill="none" stroke="#111" stroke-width="1.1"/><path d="M15.6 12.9 L17.2 10.5 L18.8 12.9 Z" fill="#111"/></svg><svg class="a" style="left:715.4px;top:33.1px" width="20" height="20.6" viewBox="0 0 20 20.6"><polygon points="6.7,0.5 13.2,4.3 13.2,10.1 6.7,13.5 0.7,10.1 0.7,4.3" fill="#fff" stroke="#46a6f0" stroke-width="1.3" stroke-linejoin="round"/><polygon points="7,7.8 12.5,4.9 12.5,9.7 7,12.6" fill="#cde7fb"/><path d="M8.8 7 L14.7 15.1 M18.4 8 L13.4 15.5" stroke="#3a4048" stroke-width="1.6"/><circle cx="10.6" cy="17.7" r="1.6" fill="none" stroke="#222" stroke-width="1.1"/><path d="M14.4 15.6 L17 16.8 L19.2 15.8 M14.2 17 H19.8 L17 20.3 Z" fill="#111" stroke="#111" stroke-width="0.6"/></svg><svg class="a" style="left:737.4px;top:33.1px" width="20" height="20" viewBox="0 0 20 20"><polygon points="6.7,0.5 13.2,4.3 13.2,10.1 6.7,13.5 0.7,10.1 0.7,4.3" fill="#fff" stroke="#46a6f0" stroke-width="1.3" stroke-linejoin="round"/><polygon points="7,7.8 12.5,4.9 12.5,9.7 7,12.6" fill="#cde7fb"/><rect x="7.3" y="8.7" width="12.5" height="10.8" fill="#fff"/><path d="M19.8 8.9 H7.5 V19.3 H19.8" fill="none" stroke="#222" stroke-width="1" stroke-dasharray="1.6 1.2"/><path d="M7.6 11.4 L12.6 9" stroke="#888" stroke-width="0.6"/></svg>
<svg class="a" style="left:377.0px;top:54.7px;background:#000" width="1533.0" height="347.0" viewBox="377.0 54.7 1533.0 347.0"><path d="M782.0 204.0 Q782.0 201.8 784.2 201.9 L801.0 202.5 Q803.2 202.6 804.6 200.9 L804.9 200.4 Q806.3 198.7 806.7 196.5 L807.4 191.7 Q807.8 189.5 810.0 189.6 L851.1 191.7 Q853.3 191.8 853.3 194.0 L853.3 198.1 Q853.3 200.3 852.9 202.4 L852.9 202.8 Q852.5 204.9 854.3 206.2 L856.9 207.9 Q858.7 209.2 860.9 209.3 L906.6 210.7 Q908.8 210.8 911.0 210.8 L945.2 211.4 Q947.4 211.4 949.6 211.0 L963.7 208.4 Q965.9 208.0 968.0 207.3 L983.9 201.7 Q986.0 201.0 986.1 198.8 L986.6 188.6 Q986.7 186.4 986.4 184.2 L985.5 177.0 Q985.2 174.8 987.4 174.7 L1019.3 173.8 Q1021.5 173.7 1023.2 172.3 L1027.5 168.9 Q1029.2 167.5 1029.8 165.4 L1038.0 136.6 Q1038.6 134.5 1039.2 132.4 L1044.2 114.3 Q1044.8 112.2 1046.9 112.8 L1087.4 124.7 Q1089.5 125.3 1088.9 127.4 L1079.7 157.9 Q1079.1 160.0 1078.4 162.1 L1066.7 196.4 Q1066.0 198.5 1067.2 200.3 L1068.6 202.3 Q1069.8 204.1 1072.0 204.4 L1087.3 206.7 Q1089.5 207.0 1091.6 207.6 L1104.2 211.1 Q1106.3 211.7 1108.5 211.4 L1122.9 209.1 Q1125.1 208.8 1127.3 208.9 L1149.2 210.1 Q1151.4 210.2 1153.6 210.6 L1167.9 213.5 Q1170.1 213.9 1172.3 213.6 L1183.0 212.3 Q1185.2 212.0 1187.4 212.1 L1216.7 213.1 Q1218.9 213.2 1221.0 212.4 L1222.5 211.9 Q1224.6 211.1 1226.0 209.4 L1252.3 179.0 Q1253.7 177.3 1255.4 178.7 L1286.7 205.6 Q1288.4 207.0 1287.1 208.8 L1285.9 210.5 Q1284.6 212.3 1285.7 214.2 L1286.7 216.1 Q1287.8 218.0 1290.0 218.4 L1304.9 220.8 Q1307.1 221.2 1305.8 223.0 L1280.3 257.4 Q1279.0 259.2 1277.0 260.1 L1273.5 261.6 Q1271.5 262.5 1269.3 262.3 L1254.9 261.2 Q1252.7 261.0 1251.1 262.5 L1248.7 264.8 Q1247.1 266.3 1246.4 268.4 L1241.2 283.0 Q1240.5 285.1 1239.9 287.2 L1234.5 304.5 Q1233.9 306.6 1231.8 305.8 L1192.9 291.5 Q1190.8 290.7 1191.5 288.6 L1199.4 264.6 Q1200.1 262.5 1198.5 260.9 L1198.0 260.4 Q1196.4 258.8 1194.2 258.7 L1178.0 258.0 Q1175.8 257.9 1173.6 258.1 L1142.3 260.8 Q1140.1 261.0 1137.9 261.3 L1108.5 265.1 Q1106.3 265.4 1104.2 266.1 L1035.2 290.0 Q1033.1 290.7 1031.6 292.3 L1027.9 296.6 Q1026.4 298.2 1026.5 300.4 L1027.9 320.4 Q1028.0 322.6 1028.0 324.8 L1028.0 336.0 Q1028.0 338.2 1025.8 338.2 L987.1 338.5 Q984.9 338.5 983.5 336.8 L982.5 335.6 Q981.1 333.9 981.3 331.7 L981.8 323.9 Q982.0 321.7 980.7 319.9 L979.6 318.4 Q978.3 316.6 976.1 316.7 L971.1 316.9 Q968.9 317.0 967.0 318.1 L923.9 343.1 Q922.0 344.2 920.8 342.3 L898.8 307.6 Q897.6 305.7 899.5 304.6 L948.2 275.8 Q950.1 274.7 951.3 272.8 L951.8 271.9 Q953.0 270.0 951.7 268.7 L951.4 268.5 Q950.1 267.2 947.9 266.9 L903.6 261.0 Q901.4 260.7 899.2 260.4 L859.5 255.0 Q857.3 254.7 855.2 255.4 L852.8 256.2 Q850.7 256.9 849.9 259.0 L847.7 265.1 Q846.9 267.2 844.7 267.1 L805.0 264.5 Q802.8 264.4 802.9 262.2 L803.3 255.4 Q803.4 253.2 801.8 251.7 L800.7 250.9 Q799.1 249.4 796.9 249.1 L785.3 247.8 Q783.1 247.5 782.0 245.6 L780.9 243.8 Q779.8 241.9 780.1 239.7 L781.3 231.0 Q781.6 228.8 781.6 226.6 Z" fill="none" stroke="#00e6e6" stroke-width="2.2" stroke-dasharray="7.8 4"/><path d="M405.8 213.3 C408.2 213.6 415.3 214.0 420.0 215.0 C424.7 216.0 427.1 216.7 433.8 219.3 C440.5 221.9 451.2 226.8 460.0 230.5 C468.8 234.2 478.2 238.7 486.4 241.8 C494.6 244.9 501.7 247.3 509.0 248.9 C516.3 250.5 523.3 251.3 530.2 251.6 C537.1 251.8 532.0 252.8 550.3 250.4 C568.6 248.0 610.2 241.4 640.0 237.0 C669.8 232.6 711.3 226.3 729.3 223.8 C747.3 221.3 742.4 222.2 748.0 222.1 C753.6 222.0 759.3 222.8 763.0 223.0 C766.7 223.2 753.8 221.9 770.0 223.3 C786.2 224.7 841.2 229.8 860.0 231.6 C878.8 233.4 872.8 233.1 882.6 234.2 C892.4 235.3 904.1 236.9 919.0 238.1 C933.9 239.3 960.1 240.9 971.7 241.5 C983.3 242.1 980.6 241.6 988.6 241.5 C996.6 241.4 1009.3 241.2 1020.0 240.8 C1030.7 240.4 1038.0 239.9 1053.0 239.3 C1068.0 238.7 1091.4 238.0 1110.0 237.4 C1128.6 236.8 1145.3 236.0 1164.5 235.7 C1183.7 235.4 1209.7 235.4 1225.0 235.8 C1240.3 236.2 1245.7 237.4 1256.5 238.4 C1267.3 239.4 1280.5 240.6 1290.0 241.7 C1299.5 242.8 1302.0 243.2 1313.7 245.1 C1325.4 247.0 1340.8 250.1 1360.0 253.2 C1379.2 256.3 1413.1 261.9 1429.0 263.8 C1444.9 265.7 1446.3 264.9 1455.4 264.5 C1464.5 264.1 1474.9 261.9 1483.7 261.4 C1492.5 260.9 1499.6 260.8 1508.4 261.7 C1517.2 262.6 1526.7 264.4 1536.7 267.0 C1546.7 269.6 1559.6 274.7 1568.4 277.2 C1577.2 279.7 1583.1 281.4 1589.6 282.2 C1596.1 283.0 1590.6 283.2 1607.3 282.2 C1624.0 281.2 1662.9 277.9 1690.0 276.0 C1717.1 274.1 1752.3 271.6 1769.7 270.5 C1787.1 269.4 1782.8 269.2 1794.5 269.1 C1806.2 269.0 1825.6 269.4 1840.0 269.6 C1854.4 269.8 1874.2 270.1 1881.0 270.2" fill="none" stroke="#e60000" stroke-width="1.55"/><path d="M405.8 213.3 L406.9 213.4 L408.4 213.5 L410.1 213.7 L412.0 213.9 L414.1 214.1 L416.1 214.4 L418.1 214.7 L420.0 215.0 L420.0 215.0 L421.7 215.4 L423.2 215.7 L424.7 216.1 L426.2 216.6 L427.7 217.1 L429.5 217.7 L431.5 218.4 L433.8 219.3" fill="none" stroke="#e87a00" stroke-width="1.6500000000000001"/><path d="M486.4 241.8 L489.4 242.9 L492.3 244.0 L495.2 245.0 L498.0 245.9 L500.8 246.7 L503.5 247.5 L506.3 248.3 L509.0 248.9 L509.0 248.9 L511.7 249.5 L514.4 250.0 L517.1 250.4 L519.8 250.8 L522.4 251.1 L525.0 251.3 L527.6 251.5 L530.2 251.6 L530.2 251.6 L532.3 251.7 L533.7 251.9 L534.8 252.0 L536.0 252.0 L537.7 251.9 L540.4 251.6 L544.5 251.2 L550.3 250.4" fill="none" stroke="#e87a00" stroke-width="1.6500000000000001"/><path d="M729.3 223.8 L735.0 223.0 L739.0 222.5 L741.6 222.2 L743.3 222.1 L744.4 222.0 L745.2 222.1 L746.3 222.1 L748.0 222.1 L748.0 222.1 L750.1 222.1 L752.2 222.2 L754.2 222.3 L756.2 222.4 L758.1 222.6 L759.9 222.8 L761.5 222.9 L763.0 223.0" fill="none" stroke="#e87a00" stroke-width="1.6500000000000001"/><path d="M971.7 241.5 L975.4 241.7 L978.1 241.8 L980.0 241.8 L981.5 241.8 L982.8 241.7 L984.2 241.6 L986.0 241.6 L988.6 241.5" fill="none" stroke="#e87a00" stroke-width="1.6500000000000001"/><path d="M1164.5 235.7 L1172.0 235.6 L1179.9 235.5 L1188.0 235.5 L1196.2 235.5 L1204.2 235.5 L1211.8 235.6 L1218.8 235.7 L1225.0 235.8 L1225.0 235.8 L1230.3 236.0 L1234.9 236.3 L1238.8 236.6 L1242.4 236.9 L1245.8 237.3 L1249.2 237.6 L1252.7 238.0 L1256.5 238.4 L1256.5 238.4 L1260.7 238.8 L1265.0 239.2 L1269.3 239.6 L1273.7 240.0 L1278.1 240.4 L1282.3 240.9 L1286.3 241.3 L1290.0 241.7 L1290.0 241.7 L1293.3 242.1 L1296.1 242.4 L1298.6 242.8 L1301.1 243.1 L1303.6 243.5 L1306.4 243.9 L1309.7 244.4 L1313.7 245.1" fill="none" stroke="#e87a00" stroke-width="1.6500000000000001"/><path d="M1429.0 263.8 L1434.3 264.4 L1438.6 264.8 L1441.9 265.0 L1444.7 265.0 L1447.2 265.0 L1449.7 264.8 L1452.3 264.7 L1455.4 264.5" fill="none" stroke="#e87a00" stroke-width="1.6500000000000001"/><path d="M1483.7 261.4 L1486.9 261.2 L1490.0 261.1 L1493.1 261.0 L1496.0 261.0 L1499.0 261.1 L1502.1 261.2 L1505.2 261.4 L1508.4 261.7 L1508.4 261.7 L1511.7 262.1 L1515.1 262.6 L1518.6 263.1 L1522.1 263.7 L1525.7 264.4 L1529.3 265.2 L1533.0 266.1 L1536.7 267.0" fill="none" stroke="#e87a00" stroke-width="1.6500000000000001"/><path d="M1568.4 277.2 L1571.6 278.1 L1574.5 278.9 L1577.3 279.7 L1579.9 280.3 L1582.4 280.9 L1584.8 281.4 L1587.2 281.8 L1589.6 282.2 L1589.6 282.2 L1591.5 282.5 L1592.7 282.7 L1593.6 282.8 L1594.6 282.9 L1596.1 282.9 L1598.4 282.8 L1602.0 282.5 L1607.3 282.2" fill="none" stroke="#e87a00" stroke-width="1.6500000000000001"/><path d="M1769.7 270.5 L1775.3 270.1 L1779.3 269.8 L1782.1 269.6 L1784.2 269.4 L1786.1 269.3 L1788.1 269.2 L1790.8 269.2 L1794.5 269.1" fill="none" stroke="#e87a00" stroke-width="1.6500000000000001"/><path d="M896.7 231.0 C900.6 231.3 912.0 232.2 920.0 232.6 C928.0 233.0 936.7 233.9 944.5 233.3 C952.3 232.7 959.2 231.0 967.0 228.8 C974.8 226.6 984.5 222.3 991.4 220.3 C998.3 218.3 1003.0 217.0 1008.3 216.6 C1013.6 216.2 1016.1 216.4 1023.3 217.7 C1030.5 218.9 1041.1 221.8 1051.5 224.1 C1061.9 226.3 1075.3 229.7 1085.7 231.2 C1096.1 232.7 1103.0 232.5 1113.8 232.9 C1124.6 233.3 1144.3 233.6 1150.4 233.7" fill="none" stroke="#e60000" stroke-width="1.5"/><path d="M919.2 239.1 C924.1 239.9 940.3 241.9 948.3 243.8 C956.3 245.7 960.8 247.3 967.0 250.3 C973.2 253.3 980.5 258.6 985.8 261.6 C991.1 264.6 992.9 266.2 998.9 268.2 C1004.9 270.2 1014.9 272.9 1021.5 273.4 C1028.1 273.9 1032.7 272.8 1038.3 271.0 C1043.9 269.2 1049.2 265.8 1055.2 262.5 C1061.2 259.2 1068.4 254.3 1074.0 251.3 C1079.6 248.3 1084.9 246.2 1089.0 244.7 C1093.1 243.2 1091.1 243.2 1098.8 242.3 C1106.5 241.5 1129.3 240.1 1135.4 239.6" fill="none" stroke="#e60000" stroke-width="1.5"/><path d="M1039.7 137.0 C1041.1 138.2 1045.0 142.2 1048.0 144.5 C1051.0 146.8 1054.4 148.9 1057.6 150.7 C1060.8 152.4 1063.6 153.5 1067.0 155.0 C1070.4 156.5 1076.3 158.9 1078.2 159.7" fill="none" stroke="#e60000" stroke-width="1.5"/><path d="M1008.2 197.6 C1009.5 197.4 1013.4 196.5 1016.0 196.4 C1018.6 196.3 1021.2 196.4 1023.8 196.8 C1026.4 197.2 1029.0 198.0 1031.5 199.0 C1034.0 200.0 1037.6 202.2 1038.8 202.8" fill="none" stroke="#e60000" stroke-width="1.5"/><path d="M1003.6 290.3 C1000.7 290.5 991.5 290.9 986.0 291.3 C980.5 291.7 975.0 292.1 970.8 292.6 C966.5 293.1 964.0 293.2 960.5 294.5 C957.0 295.8 953.5 298.2 950.1 300.1 C946.7 302.0 943.6 303.8 940.0 306.0 C936.4 308.2 930.5 312.0 928.6 313.2" fill="none" stroke="#e60000" stroke-width="1.5"/><path d="M970.8 292.6 L969.3 292.8 L967.9 292.9 L966.6 293.1 L965.4 293.3 L964.2 293.5 L963.0 293.8 L961.8 294.1 L960.5 294.5 L960.5 294.5 L959.2 295.0 L957.9 295.6 L956.6 296.3 L955.3 297.1 L954.0 297.8 L952.7 298.6 L951.4 299.4 L950.1 300.1" fill="none" stroke="#e87a00" stroke-width="1.6"/><path d="M1066.0 119.7 C1064.6 125.0 1059.8 142.9 1057.6 151.2 C1055.4 159.5 1054.5 164.0 1052.9 169.4 C1051.3 174.8 1050.4 177.9 1048.2 183.5 C1046.0 189.1 1042.4 196.8 1039.7 203.2 C1037.0 209.6 1035.2 214.6 1032.2 222.0 C1029.2 229.4 1023.6 242.5 1021.5 247.5 C1019.4 252.5 1020.6 249.4 1019.5 252.0 C1018.4 254.6 1016.1 260.4 1015.0 263.0 C1013.9 265.6 1014.3 264.8 1013.0 267.5 C1011.7 270.2 1008.7 276.6 1007.4 279.4 C1006.1 282.2 1005.7 282.6 1005.0 284.5 C1004.3 286.4 1003.7 289.0 1003.4 291.0 C1003.1 293.0 1003.1 291.2 1003.2 296.5 C1003.3 301.8 1004.0 315.8 1004.2 322.6 C1004.4 329.5 1004.5 335.1 1004.6 337.6" fill="none" stroke="#e60000" stroke-width="1.5"/><path d="M1052.9 169.4 L1052.3 171.3 L1051.8 173.1 L1051.3 174.7 L1050.8 176.4 L1050.2 178.0 L1049.6 179.7 L1049.0 181.5 L1048.2 183.5" fill="none" stroke="#e87a00" stroke-width="1.6"/><path d="M1019.5 252.0 L1019.0 253.1 L1018.5 254.4 L1017.9 255.9 L1017.2 257.5 L1016.6 259.1 L1016.0 260.6 L1015.5 261.9 L1015.0 263.0 L1015.0 263.0 L1014.7 263.8 L1014.4 264.4 L1014.2 264.8 L1014.1 265.2 L1013.9 265.6 L1013.7 266.0 L1013.4 266.6 L1013.0 267.5" fill="none" stroke="#e87a00" stroke-width="1.6"/><path d="M1005.0 284.5 L1004.8 285.3 L1004.5 286.1 L1004.3 286.9 L1004.1 287.7 L1003.9 288.6 L1003.7 289.4 L1003.5 290.2 L1003.4 291.0 L1003.4 291.0 L1003.3 291.6 L1003.2 292.0 L1003.2 292.2 L1003.1 292.5 L1003.1 293.0 L1003.1 293.7 L1003.2 294.8 L1003.2 296.5" fill="none" stroke="#e87a00" stroke-width="1.6"/><rect x="1061.5" y="118.4" width="3.5" height="1.8" fill="#f2f2f2"/><rect x="1049.3" y="168.4" width="2.6" height="1.8" fill="#f2f2f2"/><rect x="1048.4" y="175.1" width="2.2" height="1.8" fill="#f2f2f2"/><rect x="1045.0" y="181.3" width="3.4" height="1.8" fill="#f2f2f2"/><rect x="1036.2" y="201.9" width="3.0" height="1.8" fill="#f2f2f2"/><rect x="1020.2" y="252.7" width="3.0" height="1.8" fill="#f2f2f2"/><rect x="1017.7" y="258.8" width="2.6" height="1.8" fill="#f2f2f2"/><rect x="1015.4" y="264.8" width="3.0" height="1.8" fill="#f2f2f2"/><rect x="1007.6" y="283.0" width="2.8" height="1.8" fill="#f2f2f2"/><rect x="1006.6" y="289.1" width="2.0" height="1.8" fill="#f2f2f2"/><rect x="1004.6" y="295.5" width="3.0" height="1.8" fill="#f2f2f2"/><rect x="1000.6" y="336.3" width="3.4" height="1.8" fill="#f2f2f2"/></svg>
<div class="a" style="left:370.0px;top:409.8px;width:1545.9px;height:366.99999999999994px;background:#d7e4f2;border-radius:7px 7px 0 0;box-shadow:0 0 0 1.1px #70777d"></div><div class="a" style="left:370.0px;top:409.8px;width:1545.9px;height:30px;background:linear-gradient(#d2dce8 0,#d2dce8 1.2px,#c1cfdd 2px,#c5d2e0 12px,#dbe7f4 29px,#dbe7f4 100%);border-radius:7px 7px 0 0"></div><div class="a" style="left:378.3px;top:419.0px;width:15px;height:14.8px;border-radius:3px 6px 3px 3px;background:rgba(255,255,255,.45)"></div><div class="a" style="left:382.1px;top:423.3px;width:7.8px;height:7.2px;background:#4a4a50"></div><div class="t" style="left:397.4px;top:428.2px;font:12px 'Liberation Sans',sans-serif;color:#9aa0a8;letter-spacing:-0.025px;">Widok 4, Profile - LondonRd</div><div class="a" style="left:1804.3px;top:417.2px;width:33.4px;height:19.2px;box-sizing:border-box;border:1px solid #97a5ba;border-radius:2.5px;background:linear-gradient(#cfdceb 0%,#c4d3e5 100%);box-shadow:inset 0 0 0 1px rgba(255,255,255,.45)"></div><div class="a" style="left:1814.4px;top:425.5px;width:13.2px;height:4.6px;box-sizing:border-box;background:#fff;border:1px solid #8a92a2;border-radius:1.5px"></div><div class="a" style="left:1839.6px;top:417.2px;width:33.2px;height:19.2px;box-sizing:border-box;border:1px solid #97a5ba;border-radius:2.5px;background:linear-gradient(#cfdceb 0%,#c4d3e5 100%);box-shadow:inset 0 0 0 1px rgba(255,255,255,.45)"></div><div class="a" style="left:1849.6px;top:420.5px;width:13.2px;height:11.6px;box-sizing:border-box;border:1px solid #8a92a2;border-radius:1.5px;background:#fff"></div><div class="a" style="left:1852.5px;top:423.4px;width:7.4px;height:5.8px;box-sizing:border-box;border:1px solid #8a92a2;background:#c9d7e8"></div><div class="a" style="left:1875.0px;top:417.2px;width:33.4px;height:19.2px;box-sizing:border-box;border:1px solid #97a5ba;border-radius:2.5px;background:linear-gradient(#cfdceb 0%,#c4d3e5 100%);box-shadow:inset 0 0 0 1px rgba(255,255,255,.45)"></div><svg class="a" style="left:1883.7px;top:420.1px" width="16" height="13" viewBox="0 0 16 13"><path d="M0.8 2.6 L4.2 0.6 L8 3.9 L11.8 0.6 L15.2 2.6 L11.2 6.5 L15.2 10.4 L11.8 12.4 L8 9.1 L4.2 12.4 L0.8 10.4 L4.8 6.5 Z" fill="#fff" stroke="#8a92a2" stroke-width="0.9" stroke-linejoin="round"/></svg><div class="a" style="left:377.0px;top:438.90000000000003px;width:1533.0px;height:25px;background:#f0f0f0"></div>
<div class="a" style="left:370.2px;top:439px;width:6.8px;height:70.4px;background:linear-gradient(#dbe7f4,#e6eef9)"></div><div class="a" style="left:1910px;top:439px;width:5.9px;height:70.4px;background:linear-gradient(#dbe7f4,#e6eef9)"></div><svg class="a" style="left:379.9px;top:443.9px" width="19.4" height="17.2" viewBox="0 0 19.4 17.2"><rect x="0.5" y="2" width="18.2" height="12.8" fill="#fff"/><path d="M0.5 3 V14.7 H4.2 M18.6 3 V6.8" fill="none" stroke="#2b96ee" stroke-width="1.1"/><path d="M0 3.4 V1.2 Q0 0 1.2 0 H18 Q19.2 0 19.2 1.2 V3.4 Z" fill="#0b85e2"/><rect x="13.6" y="8.4" width="5.2" height="8.3" fill="#fff" stroke="#3a9ff0" stroke-width="1"/><path d="M15 11.6 H17.6 M15 14 H17.6" stroke="#8cc6f7" stroke-width="0.9"/><circle cx="9.6" cy="12.2" r="4.9" fill="#a9d6f9"/><circle cx="9.6" cy="12.2" r="3.7" fill="#1f95f2"/><path d="M9.6 11.4 V14.8 M9.6 9.4 V10.4" stroke="#e8f4fe" stroke-width="1.3"/></svg><svg class="a" style="left:404px;top:449.2px" width="7.4" height="4" viewBox="0 0 7.4 4"><path d="M0 0 H7.4 L3.7 4 Z" fill="#000"/></svg><svg class="a" style="left:417.8px;top:441.8px" width="18.8" height="18.8" viewBox="0 0 18.8 18.8"><path d="M9.4 0.4 V18.4 M0.4 9.4 H18.4 M3 3 L15.8 15.8 M15.8 3 L3 15.8" stroke="#5a6a7a" stroke-width="1.1"/><path d="M9.4 3.2 L14.8 6.2 V12.6 L9.4 15.8 L4 12.6 V6.2 Z" fill="#fff" stroke="#f09a2a" stroke-width="1.2"/><path d="M9.4 9.4 L14.8 6.2 V12.6 L9.4 15.8 Z" fill="#f08c14"/></svg><svg class="a" style="left:441.6px;top:449.2px" width="7.4" height="4" viewBox="0 0 7.4 4"><path d="M0 0 H7.4 L3.7 4 Z" fill="#000"/></svg><div class="a" style="left:454px;top:440.59999999999997px;width:1.3px;height:21px;background:#bdbdbd"></div><svg class="a" style="left:461.6px;top:441.8px" width="14" height="19" viewBox="0 0 14 19"><path d="M5.4 1.2 Q7 -0.6 8.6 1.2 V9.4 H5.4 Z" fill="#1e88e5"/><path d="M1.6 9.2 H12.4 V12.6 H1.6 Z" fill="#1e88e5"/><path d="M2 12.6 H12.4 L13.2 18.4 L0 18.4 Q1.6 16 2 12.6 Z" fill="#8b95a1"/></svg><svg class="a" style="left:482.3px;top:441.8px" width="18.8" height="19.4" viewBox="0 0 18.8 19.4"><path d="M1.6 16.8 L5.9 12.7" stroke="#f08c14" stroke-width="3.2" stroke-linecap="round"/><path d="M5.6 13 L8.6 10.2" stroke="#f08c14" stroke-width="2"/><path d="M2.2 18.6 L7.2 13.8" stroke="#c87410" stroke-width="0.8"/><circle cx="12.2" cy="6.1" r="5.2" fill="#dff0fc" stroke="#0e3a5a" stroke-width="1.85"/><path d="M12.2 2.8 V9.4 M8.9 6.1 H15.5" stroke="#0e3a5a" stroke-width="1.6"/></svg><svg class="a" style="left:504.8px;top:441.8px" width="18.8" height="19.4" viewBox="0 0 18.8 19.4"><path d="M1.6 16.8 L5.9 12.7" stroke="#f08c14" stroke-width="3.2" stroke-linecap="round"/><path d="M5.6 13 L8.6 10.2" stroke="#f08c14" stroke-width="2"/><path d="M2.2 18.6 L7.2 13.8" stroke="#c87410" stroke-width="0.8"/><circle cx="12.2" cy="6.1" r="5.2" fill="#dff0fc" stroke="#0e3a5a" stroke-width="1.85"/><path d="M8.9 6.1 H15.5" stroke="#0e3a5a" stroke-width="1.7"/></svg><svg class="a" style="left:527.4px;top:441.8px" width="19" height="19.4" viewBox="0 0 19 19.4"><path d="M0.6 0.8 H9 M0.6 0.8 V18.6 H18.6" fill="none" stroke="#333" stroke-width="1" stroke-dasharray="1.3 1.2"/><path d="M3 16 L7.4 11.9" stroke="#f08c14" stroke-width="3.2" stroke-linecap="round"/><path d="M7 12.2 L10 9.6" stroke="#f08c14" stroke-width="2"/><circle cx="13.2" cy="5.8" r="5.2" fill="#d9ecfb" stroke="#0e3a5a" stroke-width="1.85"/></svg><div class="a" style="left:547.3px;top:440.09999999999997px;width:21.8px;height:21.8px;background:#6ba3e2;border:1px solid #6596dc;box-sizing:border-box"></div><svg class="a" style="left:549.6px;top:441.5px" width="17.6" height="18.8" viewBox="0 0 17.6 18.8"><rect x="0" y="0" width="17.6" height="18.8" fill="#3d9ee9"/><rect x="0" y="0" width="17.6" height="2.8" fill="#0b85e2"/><rect x="0.9" y="3.4" width="15.900000000000002" height="14.0" fill="#fff"/><path d="M2 5.2 l3.6 0.9 l-2.6 2.6 Z M15.700000000000001 5.2 l-3.6 0.9 l2.6 2.6 Z M2 15.8 l3.6 -0.9 l-2.6 -2.6 Z M15.700000000000001 15.8 l-3.6 -0.9 l2.6 -2.6 Z" fill="#1f8fe8"/></svg><div class="a" style="left:571.2px;top:440.59999999999997px;width:1.3px;height:21px;background:#bdbdbd"></div><svg class="a" style="left:576.8px;top:442.59999999999997px" width="18.4" height="17" viewBox="0 0 18.4 17"><path d="M0.8 1.4 V16.2 H18" fill="none" stroke="#b060c0" stroke-width="1.2"/><rect x="4" y="0.8" width="12.4" height="13.6" fill="#fff" stroke="#555" stroke-width="1.3"/><path d="M4 5.2 H16.4 M4 9.8 H16.4 M8.2 5.2 V14.4 M12.2 5.2 V14.4" stroke="#555" stroke-width="1.2"/></svg><svg class="a" style="left:598.7px;top:442.59999999999997px" width="18.4" height="17" viewBox="0 0 18.4 17"><path d="M0.8 1.4 V16.2 H18" fill="none" stroke="#b060c0" stroke-width="1.2"/><rect x="2.6" y="0.8" width="14.6" height="13.6" fill="#fff" stroke="#555" stroke-width="1.3"/><path d="M2.6 5.6 H17.2 M2.6 10 H17.2 M6.4 5.6 V14.4 M10 5.6 V14.4 M13.6 5.6 V14.4" stroke="#555" stroke-width="1.2"/><path d="M5 3.2 H15 M5 3.2 l1.6 -1.2 v2.4 Z M15 3.2 l-1.6 -1.2 v2.4 Z" stroke="#222" stroke-width="0.9" fill="#222"/></svg><div class="a" style="left:620.6px;top:440.59999999999997px;width:1.3px;height:21px;background:#bdbdbd"></div><svg class="a" style="left:626.8px;top:441.09999999999997px" width="17.4" height="20" viewBox="0 0 17.4 20"><path d="M4.4 0.6 Q2.6 0.5 1.4 1.8 Q0 3 0.5 4.8 L5.8 12 Q6.3 13.3 4.6 12.8 L2.4 12 Q0.5 11.9 0.5 13.7 Q0.6 14.8 2 15.5 L10.2 19.4 Q11 19.8 11.8 19.2 L16.4 15.8 Q17 15 16.7 13.8 Q15.6 9 13.4 6 Q11.6 3.4 9.6 1.8 Q8.6 1 7.6 1.6 Q6.4 0 4.4 0.6 Z" fill="#fff" stroke="#3c3c3c" stroke-width="1.1" stroke-linejoin="round"/><path d="M2.2 2.6 L6.2 8 M4 1.6 L8.2 7 M6.4 1.5 L10 6.2 M8.6 2.2 L11.4 5.8" stroke="#666" stroke-width="0.9" fill="none"/></svg><svg class="a" style="left:648.5px;top:443.8px" width="18.8" height="15.2" viewBox="0 0 18.8 15.2"><rect x="0.6" y="1" width="18.2" height="13.4" fill="#fff"/><path d="M0.7 3 V13.4 Q0.7 14.2 1.6 14.2 H18.8" fill="none" stroke="#8fcaf6" stroke-width="1.5"/><path d="M0.7 3 V12.6" fill="none" stroke="#3a9ff0" stroke-width="1.2"/><path d="M0 3.2 V1 Q0 0 1 0 H17.8 Q18.8 0 18.8 1 V3.2 Z" fill="#0b85e2"/><path d="M3.4 8.6 L8 5 V7.6 H15.2 V9.6 H8 V12.2 Z" fill="#0b85e2"/></svg><svg class="a" style="left:670.8px;top:443.8px" width="18.8" height="15.2" viewBox="0 0 18.8 15.2"><rect x="0.6" y="1" width="18.2" height="13.4" fill="#fff"/><path d="M0.7 3 V13.4 Q0.7 14.2 1.6 14.2 H18.8" fill="none" stroke="#8fcaf6" stroke-width="1.5"/><path d="M0.7 3 V12.6" fill="none" stroke="#3a9ff0" stroke-width="1.2"/><path d="M0 3.2 V1 Q0 0 1 0 H17.8 Q18.8 0 18.8 1 V3.2 Z" fill="#0b85e2"/><path d="M15.4 8.6 L10.8 5 V7.6 H3.6 V9.6 H10.8 V12.2 Z" fill="#0b85e2"/></svg><div class="a" style="left:692.2px;top:440.59999999999997px;width:1.3px;height:21px;background:#bdbdbd"></div><div class="a" style="left:696.1px;top:440.09999999999997px;width:22px;height:22.4px;background:#c3def5;border:1.3px solid #5a4fb0;box-sizing:border-box"></div><svg class="a" style="left:697.6px;top:442.09999999999997px" width="19" height="18" viewBox="0 0 19 18"><rect x="6.8" y="0.4" width="12" height="9.2" fill="#fff"/><path d="M6.9 2 V9 H18.6" fill="none" stroke="#a8d5f8" stroke-width="1.1"/><path d="M6.4 2.3 V0.8 Q6.4 0 7.2 0 H17.8 Q18.6 0 18.6 0.8 V2.3 Z" fill="#0b85e2"/><rect x="0.6" y="8.7" width="11.7" height="8.7" rx="1" fill="#fff" stroke="#3fa2f0" stroke-width="1.3"/><path d="M0 10.4 V9 Q0 8.1 0.9 8.1 H12 Q12.9 8.1 12.9 9 V10.4 Z" fill="#0b85e2"/><path d="M13.8 15.6 H17.2 V12.6" fill="none" stroke="#111" stroke-width="1.1"/><path d="M15.6 12.9 L17.2 10.5 L18.8 12.9 Z" fill="#111"/></svg><div class="a" style="left:719.8px;top:440.59999999999997px;width:1.3px;height:21px;background:#bdbdbd"></div><svg class="a" style="left:725.4px;top:444.0px" width="19.2" height="18" viewBox="0 0 19.2 18"><path d="M0.8 0.4 V13.8 H12.4" fill="none" stroke="#da7ce0" stroke-width="1.3"/><path d="M1.4 9 Q3 8.8 4.4 7 Q6 6.8 7.4 5 Q10 3.4 12.4 4.8 Q14 6.4 15.6 7.4 L17.4 9.8" fill="none" stroke="#7cc47c" stroke-width="0.9"/><path d="M5.4 8.6 L6.6 8.6 L7.6 9.4 H9 L7.8 6.2 H9.4 L12 9.4 H14.6 Q16.6 9.8 17 10.2 Q16.6 10.7 14.6 11 H12 L9.4 14.2 H7.8 L9 11 H7.6 L6.6 11.8 H5.4 L6 10.2 Z" fill="#1a1a1a"/><path d="M13.2 14.4 H18.8 L16 17.4 Z" fill="#111"/></svg><svg class="a" style="left:747.7px;top:443.59999999999997px" width="19" height="15.4" viewBox="0 0 19 15.4"><path d="M0.8 0.2 V14.2 H18.6" fill="none" stroke="#b464b8" stroke-width="1.5"/><rect x="2.6" y="0.8" width="15.4" height="10.6" rx="1.2" fill="#fff" stroke="#3a3a3a" stroke-width="1.4"/><path d="M2.6 6.1 H18 M7.7 0.8 V11.4 M12.9 0.8 V11.4" stroke="#3a3a3a" stroke-width="1.4"/></svg><div class="a" style="left:769.2px;top:440.59999999999997px;width:1.3px;height:21px;background:#bdbdbd"></div><svg class="a" style="left:775.4px;top:442.9px" width="19.4" height="18.8" viewBox="0 0 19.4 18.8"><path d="M0.9 0.2 V15.4 H18.2" fill="none" stroke="#6e2c80" stroke-width="1.4"/><path d="M1.8 9.8 Q3 9 4.6 9.2 Q6.6 6.4 9 5.8 Q11.6 5.4 13.6 6 Q15.4 7 15.6 9.4 Q17 10.6 17.8 11.8" fill="none" stroke="#4f8f3f" stroke-width="1.5"/><path d="M2 11.6 Q6 9.8 10 10.6 T17.8 12.4" fill="none" stroke="#5ab0ee" stroke-width="1.6" stroke-dasharray="1 0.7"/><path d="M2 13.6 Q6 11.6 10 12.4 T17.8 14" fill="none" stroke="#ee6a5a" stroke-width="1.1" stroke-dasharray="1 0.8"/></svg><svg class="a" style="left:797.8px;top:442.9px" width="19.4" height="18.8" viewBox="0 0 19.4 18.8"><path d="M0.9 0.2 V15.4 H18.2" fill="none" stroke="#6e2c80" stroke-width="1.4"/><path d="M1.8 9.8 Q3 9 4.6 9.2 Q6.6 6.4 9 5.8 Q11.6 5.4 13.6 6 Q15.4 7 15.6 9.4 Q17 10.6 17.8 11.8" fill="none" stroke="#4f8f3f" stroke-width="1.5"/><path d="M2 11.6 Q6 9.8 10 10.6 T17.8 12.4" fill="none" stroke="#5ab0ee" stroke-width="1.6" stroke-dasharray="1 0.7"/><path d="M2 13.6 Q6 11.6 10 12.4 T17.8 14" fill="none" stroke="#ee6a5a" stroke-width="1.1" stroke-dasharray="1 0.8"/><rect x="9" y="7.6" width="10" height="9.6" fill="#f0f0f0"/><path d="M10.4 13.2 A4 4 0 0 1 16.6 9.4" fill="none" stroke="#1e88e5" stroke-width="2.2"/><path d="M18.2 11.4 A4 4 0 0 1 11.6 15.6" fill="none" stroke="#1e88e5" stroke-width="2.2"/><path d="M15 7.8 L18.8 8.2 L17.6 11.8 Z M9.6 14.2 L13 14.4 L11 17.4 Z" fill="#1e88e5"/><path d="M13.4 15.6 H19.2 L16.3 18.6 Z" fill="#111"/></svg><div class="a" style="left:819.4px;top:440.59999999999997px;width:1.3px;height:21px;background:#bdbdbd"></div><svg class="a" style="left:824.5px;top:442.0px" width="19.6" height="19.6" viewBox="0 0 19.6 19.6"><path d="M5.2 9.9 L9.6 0.6 L14 9.9 M6.8 6.8 H12.4 M3.8 10 H6.8 M12.4 10 H15.4" fill="none" stroke="#c01a1a" stroke-width="1.8" stroke-linejoin="round"/><path d="M0.6 17.8 Q1.6 13.4 9.2 12.3 Q16.2 12.2 18.2 15.8" fill="none" stroke="#c01a1a" stroke-width="1.6"/><path d="M13.6 16.3 H19.4 L16.5 19.4 Z" fill="#111"/></svg>
<div class="a" style="left:377.0px;top:463.0px;width:1533.0px;height:307.7px;background:#000"></div><svg class="a" style="left:377.0px;top:463.0px;will-change:transform" width="1533.0" height="307.7" viewBox="377.0 463.0 1533.0 307.7"><rect x="403.1" y="463" width="27.7" height="264.8" fill="#262626"/><rect x="1880.2" y="463" width="29.8" height="264.8" fill="#262626"/><rect x="692.3" y="463" width="86.1" height="264.8" fill="#02191b"/><path d="M692.6 463 V727.8 M778.1 463 V727.8" stroke="#36494a" stroke-width="1"/><rect x="900.1" y="463" width="88.6" height="264.8" fill="#02191b"/><path d="M900.4 463 V727.8 M988.4 463 V727.8" stroke="#36494a" stroke-width="1"/><rect x="1464.6" y="463" width="91.9" height="264.8" fill="#02191b"/><path d="M1464.9 463 V727.8 M1556.2 463 V727.8" stroke="#36494a" stroke-width="1"/><path d="M1327.4 463 V727.8" stroke="#585858" stroke-width="1"/><path d="M403.5 480.5 H1910 M403.5 510.4 H1910 M403.5 540.2 H1910 M403.5 570.1 H1910 M403.5 599.9 H1910 M403.5 629.8 H1910 M403.5 659.7 H1910 M403.5 689.5 H1910 M403.5 719.4 H1910 " stroke="#484848" stroke-width="1" stroke-dasharray="1.5 4.9" stroke-dashoffset="-4.6" fill="none"/><path d="M430.6 727.8 V463 M460.5 727.8 V463 M490.3 727.8 V463 M520.2 727.8 V463 M550.0 727.8 V463 M579.9 727.8 V463 M609.8 727.8 V463 M639.6 727.8 V463 M669.5 727.8 V463 M699.3 727.8 V463 M729.2 727.8 V463 M759.1 727.8 V463 M788.9 727.8 V463 M818.8 727.8 V463 M848.6 727.8 V463 M878.5 727.8 V463 M908.3 727.8 V463 M938.2 727.8 V463 M968.1 727.8 V463 M997.9 727.8 V463 M1027.8 727.8 V463 M1057.6 727.8 V463 M1087.5 727.8 V463 M1117.4 727.8 V463 M1147.2 727.8 V463 M1177.1 727.8 V463 M1206.9 727.8 V463 M1236.8 727.8 V463 M1266.7 727.8 V463 M1296.5 727.8 V463 M1326.4 727.8 V463 M1356.2 727.8 V463 M1386.1 727.8 V463 M1416.0 727.8 V463 M1445.8 727.8 V463 M1475.7 727.8 V463 M1505.5 727.8 V463 M1535.4 727.8 V463 M1565.2 727.8 V463 M1595.1 727.8 V463 M1625.0 727.8 V463 M1654.8 727.8 V463 M1684.7 727.8 V463 M1714.5 727.8 V463 M1744.4 727.8 V463 M1774.3 727.8 V463 M1804.1 727.8 V463 M1834.0 727.8 V463 M1863.8 727.8 V463 M1893.7 727.8 V463 " stroke="#484848" stroke-width="1" stroke-dasharray="1.5 4.9" stroke-dashoffset="-3.6" fill="none"/><path d="M430.6 610.8 L459.1 612.6 L490.4 612.9 L512.6 615.2 L524.3 612.6 L579.1 610.5 L602.6 606.6 L626.0 600.3 L653.4 595.6 L680.8 597.2 L692.6 598.3 L704.3 602.4 L725.2 603.5 L759.1 606.1 L778.6 605.6 L798.2 608.7 L837.3 610.0 L876.4 613.4 L899.9 614.4 L926.0 618.3 L957.4 620.4 L988.7 620.9 L1017.4 622.5 L1030.4 619.6 L1040.8 621.2 L1082.6 620.9 L1108.7 619.9 L1124.3 618.1 L1147.8 615.2 L1173.9 612.1 L1239.1 607.1 L1291.2 602.7 L1327.8 597.7 L1369.5 594.9 L1400.0 597.0 L1413.6 596.6 L1419.2 594.6 L1430.4 598.6 L1444.4 597.2 L1466.8 600.8 L1483.6 599.4 L1503.2 603.1 L1536.9 605.6 L1562.1 610.1 L1570.5 608.7 L1590.1 611.5 L1601.3 614.0 L1632.1 616.2 L1648.9 619.9 L1668.5 623.2 L1690.9 622.1 L1699.3 625.2 L1716.1 626.6 L1727.3 624.6 L1746.9 632.2 L1766.6 633.0 L1777.8 635.8 L1800.2 637.2 L1808.6 636.1 L1850.6 637.2 L1867.4 638.6 L1880.0 637.6" fill="none" stroke="#0a8a0a" stroke-width="1.1" stroke-dasharray="7 3.4"/><path d="M430.6 610.8 C441.9 609.7 473.9 606.3 498.2 604.3 C522.5 602.3 557.0 600.0 576.5 598.9 C596.0 597.8 604.1 597.9 615.0 597.6 C625.9 597.3 632.5 597.2 641.7 597.1 C650.9 597.0 661.5 597.1 670.0 597.3 C678.5 597.4 681.8 597.5 692.6 598.0 C703.4 598.5 720.7 599.6 735.0 600.6 C749.3 601.6 761.4 602.8 778.6 604.2 C795.8 605.6 817.8 607.4 838.0 609.0 C858.2 610.6 882.2 612.5 900.0 613.9 C917.8 615.3 930.2 616.4 945.0 617.6 C959.8 618.8 976.6 620.1 988.7 620.9 C1000.8 621.7 1006.1 622.2 1017.4 622.6 C1028.7 623.0 1045.6 623.0 1056.5 623.0 C1067.4 623.0 1072.6 623.1 1082.6 622.7 C1092.6 622.3 1103.5 621.8 1116.5 620.4 C1129.5 619.0 1140.4 617.2 1160.8 614.6 C1181.2 612.0 1218.4 607.3 1239.1 604.8 C1259.8 602.3 1270.2 601.3 1285.0 599.8 C1299.8 598.3 1313.7 596.8 1327.8 595.7 C1341.9 594.6 1358.3 593.5 1369.5 593.0 C1380.7 592.5 1387.7 592.5 1395.0 592.4 C1402.3 592.3 1406.1 592.2 1413.6 592.4 C1421.1 592.6 1431.6 593.1 1440.0 593.6 C1448.4 594.1 1444.6 593.9 1464.0 595.6 C1483.4 597.3 1523.8 600.7 1556.5 603.7 C1589.2 606.7 1624.1 610.1 1660.1 613.4 C1696.0 616.7 1735.5 620.0 1772.2 623.3 C1808.9 626.6 1862.0 631.4 1880.0 633.0" fill="none" stroke="#ff0000" stroke-width="1.9"/><path d="M595.1 618.6 L623.5 622.2 L616.4 626.6 L694.4 678.2 L611.6 634.6 L611.6 642.6 Z" fill="#ff0000"/><text x="712.4" y="692.8" font-family="Liberation Sans, sans-serif" font-size="19" fill="#ff0000" textLength="184.6">widoczny profil terenu</text><path d="M402.6 463 V728.2 H1910" fill="none" stroke="#c8c8c8" stroke-width="1.2"/><path d="M397 480.5 H402.6" stroke="#c8c8c8" stroke-width="1.1"/><text x="397.2" y="484.6" text-anchor="end" font-family="Liberation Sans, sans-serif" font-size="11" fill="#cfcfcf">210</text><path d="M397 510.4 H402.6" stroke="#c8c8c8" stroke-width="1.1"/><text x="397.2" y="514.5" text-anchor="end" font-family="Liberation Sans, sans-serif" font-size="11" fill="#cfcfcf">200</text><path d="M397 540.2 H402.6" stroke="#c8c8c8" stroke-width="1.1"/><text x="397.2" y="544.3" text-anchor="end" font-family="Liberation Sans, sans-serif" font-size="11" fill="#cfcfcf">190</text><path d="M397 570.1 H402.6" stroke="#c8c8c8" stroke-width="1.1"/><text x="397.2" y="574.2" text-anchor="end" font-family="Liberation Sans, sans-serif" font-size="11" fill="#cfcfcf">180</text><path d="M397 599.9 H402.6" stroke="#c8c8c8" stroke-width="1.1"/><text x="397.2" y="604.0" text-anchor="end" font-family="Liberation Sans, sans-serif" font-size="11" fill="#cfcfcf">170</text><path d="M397 629.8 H402.6" stroke="#c8c8c8" stroke-width="1.1"/><text x="397.2" y="633.9" text-anchor="end" font-family="Liberation Sans, sans-serif" font-size="11" fill="#cfcfcf">160</text><path d="M397 659.7 H402.6" stroke="#c8c8c8" stroke-width="1.1"/><text x="397.2" y="663.8" text-anchor="end" font-family="Liberation Sans, sans-serif" font-size="11" fill="#cfcfcf">150</text><path d="M397 689.5 H402.6" stroke="#c8c8c8" stroke-width="1.1"/><text x="397.2" y="693.6" text-anchor="end" font-family="Liberation Sans, sans-serif" font-size="11" fill="#cfcfcf">140</text><path d="M397 719.4 H402.6" stroke="#c8c8c8" stroke-width="1.1"/><text x="397.2" y="723.5" text-anchor="end" font-family="Liberation Sans, sans-serif" font-size="11" fill="#cfcfcf">130</text><path d="M430.6 728.2 V734.6" stroke="#c8c8c8" stroke-width="1.1"/><text x="431.2" y="735.4" text-anchor="end" transform="rotate(-45 431.2 735.4)" font-family="Liberation Sans, sans-serif" font-size="11" fill="#cfcfcf" letter-spacing="0.15">50+00.00</text><path d="M460.5 728.2 V734.6" stroke="#c8c8c8" stroke-width="1.1"/><text x="461.1" y="735.4" text-anchor="end" transform="rotate(-45 461.1 735.4)" font-family="Liberation Sans, sans-serif" font-size="11" fill="#cfcfcf" letter-spacing="0.15">51+00.00</text><path d="M490.3 728.2 V734.6" stroke="#c8c8c8" stroke-width="1.1"/><text x="490.9" y="735.4" text-anchor="end" transform="rotate(-45 490.9 735.4)" font-family="Liberation Sans, sans-serif" font-size="11" fill="#cfcfcf" letter-spacing="0.15">52+00.00</text><path d="M520.2 728.2 V734.6" stroke="#c8c8c8" stroke-width="1.1"/><text x="520.8" y="735.4" text-anchor="end" transform="rotate(-45 520.8 735.4)" font-family="Liberation Sans, sans-serif" font-size="11" fill="#cfcfcf" letter-spacing="0.15">53+00.00</text><path d="M550.0 728.2 V734.6" stroke="#c8c8c8" stroke-width="1.1"/><text x="550.6" y="735.4" text-anchor="end" transform="rotate(-45 550.6 735.4)" font-family="Liberation Sans, sans-serif" font-size="11" fill="#cfcfcf" letter-spacing="0.15">54+00.00</text><path d="M579.9 728.2 V734.6" stroke="#c8c8c8" stroke-width="1.1"/><text x="580.5" y="735.4" text-anchor="end" transform="rotate(-45 580.5 735.4)" font-family="Liberation Sans, sans-serif" font-size="11" fill="#cfcfcf" letter-spacing="0.15">55+00.00</text><path d="M609.8 728.2 V734.6" stroke="#c8c8c8" stroke-width="1.1"/><text x="610.4" y="735.4" text-anchor="end" transform="rotate(-45 610.4 735.4)" font-family="Liberation Sans, sans-serif" font-size="11" fill="#cfcfcf" letter-spacing="0.15">56+00.00</text><path d="M639.6 728.2 V734.6" stroke="#c8c8c8" stroke-width="1.1"/><text x="640.2" y="735.4" text-anchor="end" transform="rotate(-45 640.2 735.4)" font-family="Liberation Sans, sans-serif" font-size="11" fill="#cfcfcf" letter-spacing="0.15">57+00.00</text><path d="M669.5 728.2 V734.6" stroke="#c8c8c8" stroke-width="1.1"/><text x="670.1" y="735.4" text-anchor="end" transform="rotate(-45 670.1 735.4)" font-family="Liberation Sans, sans-serif" font-size="11" fill="#cfcfcf" letter-spacing="0.15">58+00.00</text><path d="M699.3 728.2 V734.6" stroke="#c8c8c8" stroke-width="1.1"/><text x="699.9" y="735.4" text-anchor="end" transform="rotate(-45 699.9 735.4)" font-family="Liberation Sans, sans-serif" font-size="11" fill="#cfcfcf" letter-spacing="0.15">59+00.00</text><path d="M729.2 728.2 V734.6" stroke="#c8c8c8" stroke-width="1.1"/><text x="729.8" y="735.4" text-anchor="end" transform="rotate(-45 729.8 735.4)" font-family="Liberation Sans, sans-serif" font-size="11" fill="#cfcfcf" letter-spacing="0.15">60+00.00</text><path d="M759.1 728.2 V734.6" stroke="#c8c8c8" stroke-width="1.1"/><text x="759.7" y="735.4" text-anchor="end" transform="rotate(-45 759.7 735.4)" font-family="Liberation Sans, sans-serif" font-size="11" fill="#cfcfcf" letter-spacing="0.15">61+00.00</text><path d="M788.9 728.2 V734.6" stroke="#c8c8c8" stroke-width="1.1"/><text x="789.5" y="735.4" text-anchor="end" transform="rotate(-45 789.5 735.4)" font-family="Liberation Sans, sans-serif" font-size="11" fill="#cfcfcf" letter-spacing="0.15">62+00.00</text><path d="M818.8 728.2 V734.6" stroke="#c8c8c8" stroke-width="1.1"/><text x="819.4" y="735.4" text-anchor="end" transform="rotate(-45 819.4 735.4)" font-family="Liberation Sans, sans-serif" font-size="11" fill="#cfcfcf" letter-spacing="0.15">63+00.00</text><path d="M848.6 728.2 V734.6" stroke="#c8c8c8" stroke-width="1.1"/><text x="849.2" y="735.4" text-anchor="end" transform="rotate(-45 849.2 735.4)" font-family="Liberation Sans, sans-serif" font-size="11" fill="#cfcfcf" letter-spacing="0.15">64+00.00</text><path d="M878.5 728.2 V734.6" stroke="#c8c8c8" stroke-width="1.1"/><text x="879.1" y="735.4" text-anchor="end" transform="rotate(-45 879.1 735.4)" font-family="Liberation Sans, sans-serif" font-size="11" fill="#cfcfcf" letter-spacing="0.15">65+00.00</text><path d="M908.3 728.2 V734.6" stroke="#c8c8c8" stroke-width="1.1"/><text x="908.9" y="735.4" text-anchor="end" transform="rotate(-45 908.9 735.4)" font-family="Liberation Sans, sans-serif" font-size="11" fill="#cfcfcf" letter-spacing="0.15">66+00.00</text><path d="M938.2 728.2 V734.6" stroke="#c8c8c8" stroke-width="1.1"/><text x="938.8" y="735.4" text-anchor="end" transform="rotate(-45 938.8 735.4)" font-family="Liberation Sans, sans-serif" font-size="11" fill="#cfcfcf" letter-spacing="0.15">67+00.00</text><path d="M968.1 728.2 V734.6" stroke="#c8c8c8" stroke-width="1.1"/><text x="968.7" y="735.4" text-anchor="end" transform="rotate(-45 968.7 735.4)" font-family="Liberation Sans, sans-serif" font-size="11" fill="#cfcfcf" letter-spacing="0.15">68+00.00</text><path d="M997.9 728.2 V734.6" stroke="#c8c8c8" stroke-width="1.1"/><text x="998.5" y="735.4" text-anchor="end" transform="rotate(-45 998.5 735.4)" font-family="Liberation Sans, sans-serif" font-size="11" fill="#cfcfcf" letter-spacing="0.15">69+00.00</text><path d="M1027.8 728.2 V734.6" stroke="#c8c8c8" stroke-width="1.1"/><text x="1028.4" y="735.4" text-anchor="end" transform="rotate(-45 1028.4 735.4)" font-family="Liberation Sans, sans-serif" font-size="11" fill="#cfcfcf" letter-spacing="0.15">70+00.00</text><path d="M1057.6 728.2 V734.6" stroke="#c8c8c8" stroke-width="1.1"/><text x="1058.2" y="735.4" text-anchor="end" transform="rotate(-45 1058.2 735.4)" font-family="Liberation Sans, sans-serif" font-size="11" fill="#cfcfcf" letter-spacing="0.15">71+00.00</text><path d="M1087.5 728.2 V734.6" stroke="#c8c8c8" stroke-width="1.1"/><text x="1088.1" y="735.4" text-anchor="end" transform="rotate(-45 1088.1 735.4)" font-family="Liberation Sans, sans-serif" font-size="11" fill="#cfcfcf" letter-spacing="0.15">72+00.00</text><path d="M1117.4 728.2 V734.6" stroke="#c8c8c8" stroke-width="1.1"/><text x="1118.0" y="735.4" text-anchor="end" transform="rotate(-45 1118.0 735.4)" font-family="Liberation Sans, sans-serif" font-size="11" fill="#cfcfcf" letter-spacing="0.15">73+00.00</text><path d="M1147.2 728.2 V734.6" stroke="#c8c8c8" stroke-width="1.1"/><text x="1147.8" y="735.4" text-anchor="end" transform="rotate(-45 1147.8 735.4)" font-family="Liberation Sans, sans-serif" font-size="11" fill="#cfcfcf" letter-spacing="0.15">74+00.00</text><path d="M1177.1 728.2 V734.6" stroke="#c8c8c8" stroke-width="1.1"/><text x="1177.7" y="735.4" text-anchor="end" transform="rotate(-45 1177.7 735.4)" font-family="Liberation Sans, sans-serif" font-size="11" fill="#cfcfcf" letter-spacing="0.15">75+00.00</text><path d="M1206.9 728.2 V734.6" stroke="#c8c8c8" stroke-width="1.1"/><text x="1207.5" y="735.4" text-anchor="end" transform="rotate(-45 1207.5 735.4)" font-family="Liberation Sans, sans-serif" font-size="11" fill="#cfcfcf" letter-spacing="0.15">76+00.00</text><path d="M1236.8 728.2 V734.6" stroke="#c8c8c8" stroke-width="1.1"/><text x="1237.4" y="735.4" text-anchor="end" transform="rotate(-45 1237.4 735.4)" font-family="Liberation Sans, sans-serif" font-size="11" fill="#cfcfcf" letter-spacing="0.15">77+00.00</text><path d="M1266.7 728.2 V734.6" stroke="#c8c8c8" stroke-width="1.1"/><text x="1267.3" y="735.4" text-anchor="end" transform="rotate(-45 1267.3 735.4)" font-family="Liberation Sans, sans-serif" font-size="11" fill="#cfcfcf" letter-spacing="0.15">78+00.00</text><path d="M1296.5 728.2 V734.6" stroke="#c8c8c8" stroke-width="1.1"/><text x="1297.1" y="735.4" text-anchor="end" transform="rotate(-45 1297.1 735.4)" font-family="Liberation Sans, sans-serif" font-size="11" fill="#cfcfcf" letter-spacing="0.15">79+00.00</text><path d="M1326.4 728.2 V734.6" stroke="#c8c8c8" stroke-width="1.1"/><text x="1327.0" y="735.4" text-anchor="end" transform="rotate(-45 1327.0 735.4)" font-family="Liberation Sans, sans-serif" font-size="11" fill="#cfcfcf" letter-spacing="0.15">80+00.00</text><path d="M1356.2 728.2 V734.6" stroke="#c8c8c8" stroke-width="1.1"/><text x="1356.8" y="735.4" text-anchor="end" transform="rotate(-45 1356.8 735.4)" font-family="Liberation Sans, sans-serif" font-size="11" fill="#cfcfcf" letter-spacing="0.15">81+00.00</text><path d="M1386.1 728.2 V734.6" stroke="#c8c8c8" stroke-width="1.1"/><text x="1386.7" y="735.4" text-anchor="end" transform="rotate(-45 1386.7 735.4)" font-family="Liberation Sans, sans-serif" font-size="11" fill="#cfcfcf" letter-spacing="0.15">82+00.00</text><path d="M1416.0 728.2 V734.6" stroke="#c8c8c8" stroke-width="1.1"/><text x="1416.6" y="735.4" text-anchor="end" transform="rotate(-45 1416.6 735.4)" font-family="Liberation Sans, sans-serif" font-size="11" fill="#cfcfcf" letter-spacing="0.15">83+00.00</text><path d="M1445.8 728.2 V734.6" stroke="#c8c8c8" stroke-width="1.1"/><text x="1446.4" y="735.4" text-anchor="end" transform="rotate(-45 1446.4 735.4)" font-family="Liberation Sans, sans-serif" font-size="11" fill="#cfcfcf" letter-spacing="0.15">84+00.00</text><path d="M1475.7 728.2 V734.6" stroke="#c8c8c8" stroke-width="1.1"/><text x="1476.3" y="735.4" text-anchor="end" transform="rotate(-45 1476.3 735.4)" font-family="Liberation Sans, sans-serif" font-size="11" fill="#cfcfcf" letter-spacing="0.15">85+00.00</text><path d="M1505.5 728.2 V734.6" stroke="#c8c8c8" stroke-width="1.1"/><text x="1506.1" y="735.4" text-anchor="end" transform="rotate(-45 1506.1 735.4)" font-family="Liberation Sans, sans-serif" font-size="11" fill="#cfcfcf" letter-spacing="0.15">86+00.00</text><path d="M1535.4 728.2 V734.6" stroke="#c8c8c8" stroke-width="1.1"/><text x="1536.0" y="735.4" text-anchor="end" transform="rotate(-45 1536.0 735.4)" font-family="Liberation Sans, sans-serif" font-size="11" fill="#cfcfcf" letter-spacing="0.15">87+00.00</text><path d="M1565.2 728.2 V734.6" stroke="#c8c8c8" stroke-width="1.1"/><text x="1565.8" y="735.4" text-anchor="end" transform="rotate(-45 1565.8 735.4)" font-family="Liberation Sans, sans-serif" font-size="11" fill="#cfcfcf" letter-spacing="0.15">88+00.00</text><path d="M1595.1 728.2 V734.6" stroke="#c8c8c8" stroke-width="1.1"/><text x="1595.7" y="735.4" text-anchor="end" transform="rotate(-45 1595.7 735.4)" font-family="Liberation Sans, sans-serif" font-size="11" fill="#cfcfcf" letter-spacing="0.15">89+00.00</text><path d="M1625.0 728.2 V734.6" stroke="#c8c8c8" stroke-width="1.1"/><text x="1625.6" y="735.4" text-anchor="end" transform="rotate(-45 1625.6 735.4)" font-family="Liberation Sans, sans-serif" font-size="11" fill="#cfcfcf" letter-spacing="0.15">90+00.00</text><path d="M1654.8 728.2 V734.6" stroke="#c8c8c8" stroke-width="1.1"/><text x="1655.4" y="735.4" text-anchor="end" transform="rotate(-45 1655.4 735.4)" font-family="Liberation Sans, sans-serif" font-size="11" fill="#cfcfcf" letter-spacing="0.15">91+00.00</text><path d="M1684.7 728.2 V734.6" stroke="#c8c8c8" stroke-width="1.1"/><text x="1685.3" y="735.4" text-anchor="end" transform="rotate(-45 1685.3 735.4)" font-family="Liberation Sans, sans-serif" font-size="11" fill="#cfcfcf" letter-spacing="0.15">92+00.00</text><path d="M1714.5 728.2 V734.6" stroke="#c8c8c8" stroke-width="1.1"/><text x="1715.1" y="735.4" text-anchor="end" transform="rotate(-45 1715.1 735.4)" font-family="Liberation Sans, sans-serif" font-size="11" fill="#cfcfcf" letter-spacing="0.15">93+00.00</text><path d="M1744.4 728.2 V734.6" stroke="#c8c8c8" stroke-width="1.1"/><text x="1745.0" y="735.4" text-anchor="end" transform="rotate(-45 1745.0 735.4)" font-family="Liberation Sans, sans-serif" font-size="11" fill="#cfcfcf" letter-spacing="0.15">94+00.00</text><path d="M1774.3 728.2 V734.6" stroke="#c8c8c8" stroke-width="1.1"/><text x="1774.9" y="735.4" text-anchor="end" transform="rotate(-45 1774.9 735.4)" font-family="Liberation Sans, sans-serif" font-size="11" fill="#cfcfcf" letter-spacing="0.15">95+00.00</text><path d="M1804.1 728.2 V734.6" stroke="#c8c8c8" stroke-width="1.1"/><text x="1804.7" y="735.4" text-anchor="end" transform="rotate(-45 1804.7 735.4)" font-family="Liberation Sans, sans-serif" font-size="11" fill="#cfcfcf" letter-spacing="0.15">96+00.00</text><path d="M1834.0 728.2 V734.6" stroke="#c8c8c8" stroke-width="1.1"/><text x="1834.6" y="735.4" text-anchor="end" transform="rotate(-45 1834.6 735.4)" font-family="Liberation Sans, sans-serif" font-size="11" fill="#cfcfcf" letter-spacing="0.15">97+00.00</text><path d="M1863.8 728.2 V734.6" stroke="#c8c8c8" stroke-width="1.1"/><text x="1864.4" y="735.4" text-anchor="end" transform="rotate(-45 1864.4 735.4)" font-family="Liberation Sans, sans-serif" font-size="11" fill="#cfcfcf" letter-spacing="0.15">98+00.00</text><path d="M1893.7 728.2 V734.6" stroke="#c8c8c8" stroke-width="1.1"/><text x="1894.3" y="735.4" text-anchor="end" transform="rotate(-45 1894.3 735.4)" font-family="Liberation Sans, sans-serif" font-size="11" fill="#cfcfcf" letter-spacing="0.15">99+00.00</text></svg>
<div class="a" style="left:1914.8px;top:7px;width:1.3px;height:402px;background:#8fd0ea"></div><div class="a" style="left:1916px;top:7px;width:1px;height:402px;background:#82b6c2"></div><div class="a" style="left:1915.9px;top:416px;width:1.1px;height:362px;background:#c4c4c4"></div><div class="a" style="left:369.6px;top:776.7px;width:1547.4px;height:1.3px;background:#8c8c8c"></div></body></html>
